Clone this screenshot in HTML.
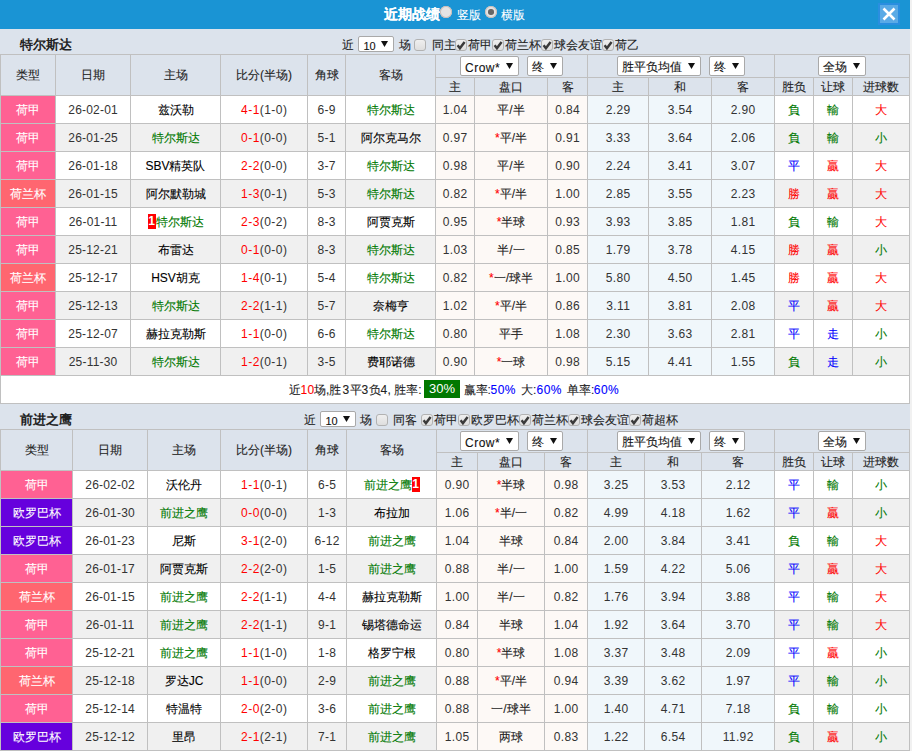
<!DOCTYPE html><html><head><meta charset="utf-8"><style>
html,body{margin:0;padding:0;background:#f1f1f1;overflow:hidden}
body{font-family:"Liberation Sans", sans-serif;font-size:12px;color:#000;width:912px;height:751px;position:relative;-webkit-text-stroke:0.1px currentColor}
div{box-sizing:content-box}
</style></head><body>
<div style="position:absolute;left:0px;top:0px;width:910px;height:751px;background:#dce3ec"></div>
<div style="position:absolute;left:0px;top:0px;width:910px;height:29px;background:#1a94d4"></div>
<div style="position:absolute;left:384px;top:6px;white-space:nowrap;line-height:14px;color:#fff;font-weight:bold;font-size:14px;line-height:16px">近期战绩</div>
<div style="position:absolute;left:440.3px;top:6.3px;width:11.5px;height:11.5px;border-radius:50%;background:#e4e4e4;box-shadow:inset 0 0 0 1px #c9bdb8"></div>
<div style="position:absolute;left:457px;top:8px;white-space:nowrap;line-height:14px;color:#fff">竖版</div>
<div style="position:absolute;left:485px;top:6.2px;width:11.8px;height:11.8px;border-radius:50%;background:#e4e4e4;box-shadow:inset 0 0 0 1px #c9bdb8"><div style="position:absolute;left:3.2px;top:3px;width:5.6px;height:5.6px;border-radius:50%;background:#666"></div></div>
<div style="position:absolute;left:501px;top:8px;white-space:nowrap;line-height:14px;color:#fff">横版</div>
<div style="position:absolute;left:878px;top:3px;width:22px;height:22px;background:#2a8ee0"></div>
<div style="position:absolute;left:880px;top:5px;width:18px;height:18px;background:#5aaae6"></div>
<svg style="position:absolute;left:880px;top:5px" width="18" height="18"><path d="M3.5 3.5L14.5 14.5M14.5 3.5L3.5 14.5" stroke="#fff" stroke-width="2.6"/></svg>
<div style="position:absolute;left:20px;top:37.5px;white-space:nowrap;line-height:14px;font-weight:bold;font-size:13px;color:#222;-webkit-text-stroke:0">特尔斯达</div>
<div style="position:absolute;left:342.3px;top:38px;white-space:nowrap;line-height:14px;color:#222">近</div>
<div style="position:absolute;left:358px;top:36px;width:34px;height:14px;border:1px solid #a9a9a9;border-radius:2px;background:#fff;line-height:14px"><span style="position:absolute;left:4.5px;top:1.5px;color:#111;font-size:11px">10</span><svg style="position:absolute;right:5px;top:4px" width="7" height="6"><path d="M0 0H7L3.5 6Z" fill="#111"/></svg></div>
<div style="position:absolute;left:398.5px;top:38px;white-space:nowrap;line-height:14px;color:#222">场</div>
<div style="position:absolute;left:414px;top:39px;width:10px;height:10px;border:1px solid #b2b2b2;border-radius:3px;background:linear-gradient(#efefef,#dedede);"></div>
<div style="position:absolute;left:431.5px;top:38px;white-space:nowrap;line-height:14px;color:#222">同主</div>
<div style="position:absolute;left:455px;top:39px;width:10px;height:10px;border:1px solid #b2b2b2;border-radius:3px;background:linear-gradient(#efefef,#dedede);"><svg style="position:absolute;left:-1px;top:-1px" width="12" height="12"><path d="M2.6 6.3L4.9 9.2L9.6 2.9" fill="none" stroke="#3a3a3a" stroke-width="2.5"/></svg></div>
<div style="position:absolute;left:468px;top:38px;white-space:nowrap;line-height:14px;color:#222">荷甲</div>
<div style="position:absolute;left:492px;top:39px;width:10px;height:10px;border:1px solid #b2b2b2;border-radius:3px;background:linear-gradient(#efefef,#dedede);"><svg style="position:absolute;left:-1px;top:-1px" width="12" height="12"><path d="M2.6 6.3L4.9 9.2L9.6 2.9" fill="none" stroke="#3a3a3a" stroke-width="2.5"/></svg></div>
<div style="position:absolute;left:504.75px;top:38px;white-space:nowrap;line-height:14px;color:#222">荷兰杯</div>
<div style="position:absolute;left:541px;top:39px;width:10px;height:10px;border:1px solid #b2b2b2;border-radius:3px;background:linear-gradient(#efefef,#dedede);"><svg style="position:absolute;left:-1px;top:-1px" width="12" height="12"><path d="M2.6 6.3L4.9 9.2L9.6 2.9" fill="none" stroke="#3a3a3a" stroke-width="2.5"/></svg></div>
<div style="position:absolute;left:554.1px;top:38px;white-space:nowrap;line-height:14px;color:#222">球会友谊</div>
<div style="position:absolute;left:602px;top:39px;width:10px;height:10px;border:1px solid #b2b2b2;border-radius:3px;background:linear-gradient(#efefef,#dedede);"><svg style="position:absolute;left:-1px;top:-1px" width="12" height="12"><path d="M2.6 6.3L4.9 9.2L9.6 2.9" fill="none" stroke="#3a3a3a" stroke-width="2.5"/></svg></div>
<div style="position:absolute;left:615px;top:38px;white-space:nowrap;line-height:14px;color:#222">荷乙</div>
<div style="position:absolute;left:0px;top:54px;width:910px;height:42px;background:#dce3ec"></div>
<div style="position:absolute;left:1px;top:55px;width:54px;height:40px;text-align:center;line-height:40px;white-space:nowrap;overflow:visible;color:#222;">类型</div>
<div style="position:absolute;left:56px;top:55px;width:74px;height:40px;text-align:center;line-height:40px;white-space:nowrap;overflow:visible;color:#222;">日期</div>
<div style="position:absolute;left:131px;top:55px;width:89px;height:40px;text-align:center;line-height:40px;white-space:nowrap;overflow:visible;color:#222;">主场</div>
<div style="position:absolute;left:221px;top:55px;width:86px;height:40px;text-align:center;line-height:40px;white-space:nowrap;overflow:visible;color:#222;">比分(半场)</div>
<div style="position:absolute;left:308px;top:55px;width:37px;height:40px;text-align:center;line-height:40px;white-space:nowrap;overflow:visible;color:#222;">角球</div>
<div style="position:absolute;left:346px;top:55px;width:89px;height:40px;text-align:center;line-height:40px;white-space:nowrap;overflow:visible;color:#222;">客场</div>
<div style="position:absolute;left:436px;top:78px;width:38px;height:17px;text-align:center;line-height:19px;white-space:nowrap;overflow:visible;color:#222;">主</div>
<div style="position:absolute;left:475px;top:78px;width:72px;height:17px;text-align:center;line-height:19px;white-space:nowrap;overflow:visible;color:#222;">盘口</div>
<div style="position:absolute;left:548px;top:78px;width:39px;height:17px;text-align:center;line-height:19px;white-space:nowrap;overflow:visible;color:#222;">客</div>
<div style="position:absolute;left:588px;top:78px;width:60px;height:17px;text-align:center;line-height:19px;white-space:nowrap;overflow:visible;color:#222;">主</div>
<div style="position:absolute;left:649px;top:78px;width:62px;height:17px;text-align:center;line-height:19px;white-space:nowrap;overflow:visible;color:#222;">和</div>
<div style="position:absolute;left:712px;top:78px;width:62px;height:17px;text-align:center;line-height:19px;white-space:nowrap;overflow:visible;color:#222;">客</div>
<div style="position:absolute;left:775px;top:78px;width:38px;height:17px;text-align:center;line-height:19px;white-space:nowrap;overflow:visible;color:#222;">胜负</div>
<div style="position:absolute;left:814px;top:78px;width:38px;height:17px;text-align:center;line-height:19px;white-space:nowrap;overflow:visible;color:#222;">让球</div>
<div style="position:absolute;left:853px;top:78px;width:56px;height:17px;text-align:center;line-height:19px;white-space:nowrap;overflow:visible;color:#222;">进球数</div>
<div style="position:absolute;left:460px;top:56px;width:57px;height:18px;border:1px solid #a9a9a9;border-radius:2px;background:#fff;line-height:18px;"><span style="position:absolute;left:4px;top:2px;color:#111"><span style="letter-spacing:0.5px">Crow*</span></span><svg style="position:absolute;right:5px;top:6px" width="7" height="6"><path d="M0 0H7L3.5 6Z" fill="#111"/></svg></div>
<div style="position:absolute;left:527px;top:56px;width:34px;height:18px;border:1px solid #a9a9a9;border-radius:2px;background:#fff;line-height:18px;"><span style="position:absolute;left:4px;top:1px;color:#111">终</span><svg style="position:absolute;right:5px;top:6px" width="7" height="6"><path d="M0 0H7L3.5 6Z" fill="#111"/></svg></div>
<div style="position:absolute;left:617px;top:56px;width:82px;height:18px;border:1px solid #a9a9a9;border-radius:2px;background:#fff;line-height:18px;"><span style="position:absolute;left:4px;top:1px;color:#111">胜平负均值</span><svg style="position:absolute;right:5px;top:6px" width="7" height="6"><path d="M0 0H7L3.5 6Z" fill="#111"/></svg></div>
<div style="position:absolute;left:709px;top:56px;width:34px;height:18px;border:1px solid #a9a9a9;border-radius:2px;background:#fff;line-height:18px;"><span style="position:absolute;left:4px;top:1px;color:#111">终</span><svg style="position:absolute;right:5px;top:6px" width="7" height="6"><path d="M0 0H7L3.5 6Z" fill="#111"/></svg></div>
<div style="position:absolute;left:818px;top:56px;width:46px;height:18px;border:1px solid #a9a9a9;border-radius:2px;background:#fff;line-height:18px;"><span style="position:absolute;left:4px;top:1px;color:#111">全场</span><svg style="position:absolute;right:5px;top:6px" width="7" height="6"><path d="M0 0H7L3.5 6Z" fill="#111"/></svg></div>
<div style="position:absolute;left:1px;top:96px;width:54px;height:27px;text-align:center;line-height:29px;white-space:nowrap;overflow:visible;color:#fff;background:#ff6193;">荷甲</div>
<div style="position:absolute;left:56px;top:96px;width:74px;height:27px;text-align:center;line-height:29px;white-space:nowrap;overflow:visible;color:#333;letter-spacing:0.2px;text-indent:0.2px;-webkit-text-stroke:0;background:#ffffff;">26-02-01</div>
<div style="position:absolute;left:131px;top:96px;width:89px;height:27px;text-align:center;line-height:29px;white-space:nowrap;overflow:visible;;background:#ffffff;">兹沃勒</div>
<div style="position:absolute;left:221px;top:96px;width:86px;height:27px;text-align:center;line-height:29px;white-space:nowrap;overflow:visible;letter-spacing:0.45px;text-indent:0.45px;-webkit-text-stroke:0;background:#ffffff;"><span style="color:#ff0000">4-1</span><span style="color:#333">(1-0)</span></div>
<div style="position:absolute;left:308px;top:96px;width:37px;height:27px;text-align:center;line-height:29px;white-space:nowrap;overflow:visible;color:#333;letter-spacing:0.3px;text-indent:0.3px;-webkit-text-stroke:0;background:#ffffff;">6-9</div>
<div style="position:absolute;left:346px;top:96px;width:89px;height:27px;text-align:center;line-height:29px;white-space:nowrap;overflow:visible;;background:#ffffff;"><span style="color:#007800">特尔斯达</span></div>
<div style="position:absolute;left:436px;top:96px;width:38px;height:27px;text-align:center;line-height:29px;white-space:nowrap;overflow:visible;color:#333;letter-spacing:0.4px;text-indent:0.4px;-webkit-text-stroke:0;background:#fdf9f6;">1.04</div>
<div style="position:absolute;left:475px;top:96px;width:72px;height:27px;text-align:center;line-height:29px;white-space:nowrap;overflow:visible;color:#222;background:#fdf9f6;">平/半</div>
<div style="position:absolute;left:548px;top:96px;width:39px;height:27px;text-align:center;line-height:29px;white-space:nowrap;overflow:visible;color:#333;letter-spacing:0.4px;text-indent:0.4px;-webkit-text-stroke:0;background:#fdf9f6;">0.84</div>
<div style="position:absolute;left:588px;top:96px;width:60px;height:27px;text-align:center;line-height:29px;white-space:nowrap;overflow:visible;color:#333;letter-spacing:0.4px;text-indent:0.4px;-webkit-text-stroke:0;background:#f0f7fb;">2.29</div>
<div style="position:absolute;left:649px;top:96px;width:62px;height:27px;text-align:center;line-height:29px;white-space:nowrap;overflow:visible;color:#333;letter-spacing:0.4px;text-indent:0.4px;-webkit-text-stroke:0;background:#f0f7fb;">3.54</div>
<div style="position:absolute;left:712px;top:96px;width:62px;height:27px;text-align:center;line-height:29px;white-space:nowrap;overflow:visible;color:#333;letter-spacing:0.4px;text-indent:0.4px;-webkit-text-stroke:0;background:#f0f7fb;">2.90</div>
<div style="position:absolute;left:775px;top:96px;width:38px;height:27px;text-align:center;line-height:29px;white-space:nowrap;overflow:visible;color:#007800;background:#ffffff;">負</div>
<div style="position:absolute;left:814px;top:96px;width:38px;height:27px;text-align:center;line-height:29px;white-space:nowrap;overflow:visible;color:#007800;background:#ffffff;">輸</div>
<div style="position:absolute;left:853px;top:96px;width:56px;height:27px;text-align:center;line-height:29px;white-space:nowrap;overflow:visible;color:#ff0000;background:#ffffff;">大</div>
<div style="position:absolute;left:1px;top:124px;width:54px;height:27px;text-align:center;line-height:29px;white-space:nowrap;overflow:visible;color:#fff;background:#ff6193;">荷甲</div>
<div style="position:absolute;left:56px;top:124px;width:74px;height:27px;text-align:center;line-height:29px;white-space:nowrap;overflow:visible;color:#333;letter-spacing:0.2px;text-indent:0.2px;-webkit-text-stroke:0;background:#f0f0f0;">26-01-25</div>
<div style="position:absolute;left:131px;top:124px;width:89px;height:27px;text-align:center;line-height:29px;white-space:nowrap;overflow:visible;;background:#f0f0f0;"><span style="color:#007800">特尔斯达</span></div>
<div style="position:absolute;left:221px;top:124px;width:86px;height:27px;text-align:center;line-height:29px;white-space:nowrap;overflow:visible;letter-spacing:0.45px;text-indent:0.45px;-webkit-text-stroke:0;background:#f0f0f0;"><span style="color:#ff0000">0-1</span><span style="color:#333">(0-0)</span></div>
<div style="position:absolute;left:308px;top:124px;width:37px;height:27px;text-align:center;line-height:29px;white-space:nowrap;overflow:visible;color:#333;letter-spacing:0.3px;text-indent:0.3px;-webkit-text-stroke:0;background:#f0f0f0;">5-1</div>
<div style="position:absolute;left:346px;top:124px;width:89px;height:27px;text-align:center;line-height:29px;white-space:nowrap;overflow:visible;;background:#f0f0f0;">阿尔克马尔</div>
<div style="position:absolute;left:436px;top:124px;width:38px;height:27px;text-align:center;line-height:29px;white-space:nowrap;overflow:visible;color:#333;letter-spacing:0.4px;text-indent:0.4px;-webkit-text-stroke:0;background:#fdf9f6;">0.97</div>
<div style="position:absolute;left:475px;top:124px;width:72px;height:27px;text-align:center;line-height:29px;white-space:nowrap;overflow:visible;color:#222;background:#fdf9f6;"><span style="color:#ff0000">*</span>平/半</div>
<div style="position:absolute;left:548px;top:124px;width:39px;height:27px;text-align:center;line-height:29px;white-space:nowrap;overflow:visible;color:#333;letter-spacing:0.4px;text-indent:0.4px;-webkit-text-stroke:0;background:#fdf9f6;">0.91</div>
<div style="position:absolute;left:588px;top:124px;width:60px;height:27px;text-align:center;line-height:29px;white-space:nowrap;overflow:visible;color:#333;letter-spacing:0.4px;text-indent:0.4px;-webkit-text-stroke:0;background:#f0f7fb;">3.33</div>
<div style="position:absolute;left:649px;top:124px;width:62px;height:27px;text-align:center;line-height:29px;white-space:nowrap;overflow:visible;color:#333;letter-spacing:0.4px;text-indent:0.4px;-webkit-text-stroke:0;background:#f0f7fb;">3.64</div>
<div style="position:absolute;left:712px;top:124px;width:62px;height:27px;text-align:center;line-height:29px;white-space:nowrap;overflow:visible;color:#333;letter-spacing:0.4px;text-indent:0.4px;-webkit-text-stroke:0;background:#f0f7fb;">2.06</div>
<div style="position:absolute;left:775px;top:124px;width:38px;height:27px;text-align:center;line-height:29px;white-space:nowrap;overflow:visible;color:#007800;background:#f0f0f0;">負</div>
<div style="position:absolute;left:814px;top:124px;width:38px;height:27px;text-align:center;line-height:29px;white-space:nowrap;overflow:visible;color:#007800;background:#f0f0f0;">輸</div>
<div style="position:absolute;left:853px;top:124px;width:56px;height:27px;text-align:center;line-height:29px;white-space:nowrap;overflow:visible;color:#007800;background:#f0f0f0;">小</div>
<div style="position:absolute;left:1px;top:152px;width:54px;height:27px;text-align:center;line-height:29px;white-space:nowrap;overflow:visible;color:#fff;background:#ff6193;">荷甲</div>
<div style="position:absolute;left:56px;top:152px;width:74px;height:27px;text-align:center;line-height:29px;white-space:nowrap;overflow:visible;color:#333;letter-spacing:0.2px;text-indent:0.2px;-webkit-text-stroke:0;background:#ffffff;">26-01-18</div>
<div style="position:absolute;left:131px;top:152px;width:89px;height:27px;text-align:center;line-height:29px;white-space:nowrap;overflow:visible;;background:#ffffff;">SBV精英队</div>
<div style="position:absolute;left:221px;top:152px;width:86px;height:27px;text-align:center;line-height:29px;white-space:nowrap;overflow:visible;letter-spacing:0.45px;text-indent:0.45px;-webkit-text-stroke:0;background:#ffffff;"><span style="color:#ff0000">2-2</span><span style="color:#333">(0-0)</span></div>
<div style="position:absolute;left:308px;top:152px;width:37px;height:27px;text-align:center;line-height:29px;white-space:nowrap;overflow:visible;color:#333;letter-spacing:0.3px;text-indent:0.3px;-webkit-text-stroke:0;background:#ffffff;">3-7</div>
<div style="position:absolute;left:346px;top:152px;width:89px;height:27px;text-align:center;line-height:29px;white-space:nowrap;overflow:visible;;background:#ffffff;"><span style="color:#007800">特尔斯达</span></div>
<div style="position:absolute;left:436px;top:152px;width:38px;height:27px;text-align:center;line-height:29px;white-space:nowrap;overflow:visible;color:#333;letter-spacing:0.4px;text-indent:0.4px;-webkit-text-stroke:0;background:#fdf9f6;">0.98</div>
<div style="position:absolute;left:475px;top:152px;width:72px;height:27px;text-align:center;line-height:29px;white-space:nowrap;overflow:visible;color:#222;background:#fdf9f6;">平/半</div>
<div style="position:absolute;left:548px;top:152px;width:39px;height:27px;text-align:center;line-height:29px;white-space:nowrap;overflow:visible;color:#333;letter-spacing:0.4px;text-indent:0.4px;-webkit-text-stroke:0;background:#fdf9f6;">0.90</div>
<div style="position:absolute;left:588px;top:152px;width:60px;height:27px;text-align:center;line-height:29px;white-space:nowrap;overflow:visible;color:#333;letter-spacing:0.4px;text-indent:0.4px;-webkit-text-stroke:0;background:#f0f7fb;">2.24</div>
<div style="position:absolute;left:649px;top:152px;width:62px;height:27px;text-align:center;line-height:29px;white-space:nowrap;overflow:visible;color:#333;letter-spacing:0.4px;text-indent:0.4px;-webkit-text-stroke:0;background:#f0f7fb;">3.41</div>
<div style="position:absolute;left:712px;top:152px;width:62px;height:27px;text-align:center;line-height:29px;white-space:nowrap;overflow:visible;color:#333;letter-spacing:0.4px;text-indent:0.4px;-webkit-text-stroke:0;background:#f0f7fb;">3.07</div>
<div style="position:absolute;left:775px;top:152px;width:38px;height:27px;text-align:center;line-height:29px;white-space:nowrap;overflow:visible;color:#0000ff;background:#ffffff;">平</div>
<div style="position:absolute;left:814px;top:152px;width:38px;height:27px;text-align:center;line-height:29px;white-space:nowrap;overflow:visible;color:#ff0000;background:#ffffff;">贏</div>
<div style="position:absolute;left:853px;top:152px;width:56px;height:27px;text-align:center;line-height:29px;white-space:nowrap;overflow:visible;color:#ff0000;background:#ffffff;">大</div>
<div style="position:absolute;left:1px;top:180px;width:54px;height:27px;text-align:center;line-height:29px;white-space:nowrap;overflow:visible;color:#fff;background:#ff6670;">荷兰杯</div>
<div style="position:absolute;left:56px;top:180px;width:74px;height:27px;text-align:center;line-height:29px;white-space:nowrap;overflow:visible;color:#333;letter-spacing:0.2px;text-indent:0.2px;-webkit-text-stroke:0;background:#f0f0f0;">26-01-15</div>
<div style="position:absolute;left:131px;top:180px;width:89px;height:27px;text-align:center;line-height:29px;white-space:nowrap;overflow:visible;;background:#f0f0f0;">阿尔默勒城</div>
<div style="position:absolute;left:221px;top:180px;width:86px;height:27px;text-align:center;line-height:29px;white-space:nowrap;overflow:visible;letter-spacing:0.45px;text-indent:0.45px;-webkit-text-stroke:0;background:#f0f0f0;"><span style="color:#ff0000">1-3</span><span style="color:#333">(0-1)</span></div>
<div style="position:absolute;left:308px;top:180px;width:37px;height:27px;text-align:center;line-height:29px;white-space:nowrap;overflow:visible;color:#333;letter-spacing:0.3px;text-indent:0.3px;-webkit-text-stroke:0;background:#f0f0f0;">5-3</div>
<div style="position:absolute;left:346px;top:180px;width:89px;height:27px;text-align:center;line-height:29px;white-space:nowrap;overflow:visible;;background:#f0f0f0;"><span style="color:#007800">特尔斯达</span></div>
<div style="position:absolute;left:436px;top:180px;width:38px;height:27px;text-align:center;line-height:29px;white-space:nowrap;overflow:visible;color:#333;letter-spacing:0.4px;text-indent:0.4px;-webkit-text-stroke:0;background:#fdf9f6;">0.82</div>
<div style="position:absolute;left:475px;top:180px;width:72px;height:27px;text-align:center;line-height:29px;white-space:nowrap;overflow:visible;color:#222;background:#fdf9f6;"><span style="color:#ff0000">*</span>平/半</div>
<div style="position:absolute;left:548px;top:180px;width:39px;height:27px;text-align:center;line-height:29px;white-space:nowrap;overflow:visible;color:#333;letter-spacing:0.4px;text-indent:0.4px;-webkit-text-stroke:0;background:#fdf9f6;">1.00</div>
<div style="position:absolute;left:588px;top:180px;width:60px;height:27px;text-align:center;line-height:29px;white-space:nowrap;overflow:visible;color:#333;letter-spacing:0.4px;text-indent:0.4px;-webkit-text-stroke:0;background:#f0f7fb;">2.85</div>
<div style="position:absolute;left:649px;top:180px;width:62px;height:27px;text-align:center;line-height:29px;white-space:nowrap;overflow:visible;color:#333;letter-spacing:0.4px;text-indent:0.4px;-webkit-text-stroke:0;background:#f0f7fb;">3.55</div>
<div style="position:absolute;left:712px;top:180px;width:62px;height:27px;text-align:center;line-height:29px;white-space:nowrap;overflow:visible;color:#333;letter-spacing:0.4px;text-indent:0.4px;-webkit-text-stroke:0;background:#f0f7fb;">2.23</div>
<div style="position:absolute;left:775px;top:180px;width:38px;height:27px;text-align:center;line-height:29px;white-space:nowrap;overflow:visible;color:#ff0000;background:#f0f0f0;">勝</div>
<div style="position:absolute;left:814px;top:180px;width:38px;height:27px;text-align:center;line-height:29px;white-space:nowrap;overflow:visible;color:#ff0000;background:#f0f0f0;">贏</div>
<div style="position:absolute;left:853px;top:180px;width:56px;height:27px;text-align:center;line-height:29px;white-space:nowrap;overflow:visible;color:#ff0000;background:#f0f0f0;">大</div>
<div style="position:absolute;left:1px;top:208px;width:54px;height:27px;text-align:center;line-height:29px;white-space:nowrap;overflow:visible;color:#fff;background:#ff6193;">荷甲</div>
<div style="position:absolute;left:56px;top:208px;width:74px;height:27px;text-align:center;line-height:29px;white-space:nowrap;overflow:visible;color:#333;letter-spacing:0.2px;text-indent:0.2px;-webkit-text-stroke:0;background:#ffffff;">26-01-11</div>
<div style="position:absolute;left:131px;top:208px;width:89px;height:27px;text-align:center;line-height:29px;white-space:nowrap;overflow:visible;;background:#ffffff;"><span style="display:inline-block;width:8px;height:15px;line-height:15px;vertical-align:1px;background:#f00;color:#fff;font-weight:bold;text-align:center;-webkit-text-stroke:0">1</span><span style="color:#007800">特尔斯达</span></div>
<div style="position:absolute;left:221px;top:208px;width:86px;height:27px;text-align:center;line-height:29px;white-space:nowrap;overflow:visible;letter-spacing:0.45px;text-indent:0.45px;-webkit-text-stroke:0;background:#ffffff;"><span style="color:#ff0000">2-3</span><span style="color:#333">(0-2)</span></div>
<div style="position:absolute;left:308px;top:208px;width:37px;height:27px;text-align:center;line-height:29px;white-space:nowrap;overflow:visible;color:#333;letter-spacing:0.3px;text-indent:0.3px;-webkit-text-stroke:0;background:#ffffff;">8-3</div>
<div style="position:absolute;left:346px;top:208px;width:89px;height:27px;text-align:center;line-height:29px;white-space:nowrap;overflow:visible;;background:#ffffff;">阿贾克斯</div>
<div style="position:absolute;left:436px;top:208px;width:38px;height:27px;text-align:center;line-height:29px;white-space:nowrap;overflow:visible;color:#333;letter-spacing:0.4px;text-indent:0.4px;-webkit-text-stroke:0;background:#fdf9f6;">0.95</div>
<div style="position:absolute;left:475px;top:208px;width:72px;height:27px;text-align:center;line-height:29px;white-space:nowrap;overflow:visible;color:#222;background:#fdf9f6;"><span style="color:#ff0000">*</span>半球</div>
<div style="position:absolute;left:548px;top:208px;width:39px;height:27px;text-align:center;line-height:29px;white-space:nowrap;overflow:visible;color:#333;letter-spacing:0.4px;text-indent:0.4px;-webkit-text-stroke:0;background:#fdf9f6;">0.93</div>
<div style="position:absolute;left:588px;top:208px;width:60px;height:27px;text-align:center;line-height:29px;white-space:nowrap;overflow:visible;color:#333;letter-spacing:0.4px;text-indent:0.4px;-webkit-text-stroke:0;background:#f0f7fb;">3.93</div>
<div style="position:absolute;left:649px;top:208px;width:62px;height:27px;text-align:center;line-height:29px;white-space:nowrap;overflow:visible;color:#333;letter-spacing:0.4px;text-indent:0.4px;-webkit-text-stroke:0;background:#f0f7fb;">3.85</div>
<div style="position:absolute;left:712px;top:208px;width:62px;height:27px;text-align:center;line-height:29px;white-space:nowrap;overflow:visible;color:#333;letter-spacing:0.4px;text-indent:0.4px;-webkit-text-stroke:0;background:#f0f7fb;">1.81</div>
<div style="position:absolute;left:775px;top:208px;width:38px;height:27px;text-align:center;line-height:29px;white-space:nowrap;overflow:visible;color:#007800;background:#ffffff;">負</div>
<div style="position:absolute;left:814px;top:208px;width:38px;height:27px;text-align:center;line-height:29px;white-space:nowrap;overflow:visible;color:#007800;background:#ffffff;">輸</div>
<div style="position:absolute;left:853px;top:208px;width:56px;height:27px;text-align:center;line-height:29px;white-space:nowrap;overflow:visible;color:#ff0000;background:#ffffff;">大</div>
<div style="position:absolute;left:1px;top:236px;width:54px;height:27px;text-align:center;line-height:29px;white-space:nowrap;overflow:visible;color:#fff;background:#ff6193;">荷甲</div>
<div style="position:absolute;left:56px;top:236px;width:74px;height:27px;text-align:center;line-height:29px;white-space:nowrap;overflow:visible;color:#333;letter-spacing:0.2px;text-indent:0.2px;-webkit-text-stroke:0;background:#f0f0f0;">25-12-21</div>
<div style="position:absolute;left:131px;top:236px;width:89px;height:27px;text-align:center;line-height:29px;white-space:nowrap;overflow:visible;;background:#f0f0f0;">布雷达</div>
<div style="position:absolute;left:221px;top:236px;width:86px;height:27px;text-align:center;line-height:29px;white-space:nowrap;overflow:visible;letter-spacing:0.45px;text-indent:0.45px;-webkit-text-stroke:0;background:#f0f0f0;"><span style="color:#ff0000">0-1</span><span style="color:#333">(0-0)</span></div>
<div style="position:absolute;left:308px;top:236px;width:37px;height:27px;text-align:center;line-height:29px;white-space:nowrap;overflow:visible;color:#333;letter-spacing:0.3px;text-indent:0.3px;-webkit-text-stroke:0;background:#f0f0f0;">8-3</div>
<div style="position:absolute;left:346px;top:236px;width:89px;height:27px;text-align:center;line-height:29px;white-space:nowrap;overflow:visible;;background:#f0f0f0;"><span style="color:#007800">特尔斯达</span></div>
<div style="position:absolute;left:436px;top:236px;width:38px;height:27px;text-align:center;line-height:29px;white-space:nowrap;overflow:visible;color:#333;letter-spacing:0.4px;text-indent:0.4px;-webkit-text-stroke:0;background:#fdf9f6;">1.03</div>
<div style="position:absolute;left:475px;top:236px;width:72px;height:27px;text-align:center;line-height:29px;white-space:nowrap;overflow:visible;color:#222;background:#fdf9f6;">半/一</div>
<div style="position:absolute;left:548px;top:236px;width:39px;height:27px;text-align:center;line-height:29px;white-space:nowrap;overflow:visible;color:#333;letter-spacing:0.4px;text-indent:0.4px;-webkit-text-stroke:0;background:#fdf9f6;">0.85</div>
<div style="position:absolute;left:588px;top:236px;width:60px;height:27px;text-align:center;line-height:29px;white-space:nowrap;overflow:visible;color:#333;letter-spacing:0.4px;text-indent:0.4px;-webkit-text-stroke:0;background:#f0f7fb;">1.79</div>
<div style="position:absolute;left:649px;top:236px;width:62px;height:27px;text-align:center;line-height:29px;white-space:nowrap;overflow:visible;color:#333;letter-spacing:0.4px;text-indent:0.4px;-webkit-text-stroke:0;background:#f0f7fb;">3.78</div>
<div style="position:absolute;left:712px;top:236px;width:62px;height:27px;text-align:center;line-height:29px;white-space:nowrap;overflow:visible;color:#333;letter-spacing:0.4px;text-indent:0.4px;-webkit-text-stroke:0;background:#f0f7fb;">4.15</div>
<div style="position:absolute;left:775px;top:236px;width:38px;height:27px;text-align:center;line-height:29px;white-space:nowrap;overflow:visible;color:#ff0000;background:#f0f0f0;">勝</div>
<div style="position:absolute;left:814px;top:236px;width:38px;height:27px;text-align:center;line-height:29px;white-space:nowrap;overflow:visible;color:#ff0000;background:#f0f0f0;">贏</div>
<div style="position:absolute;left:853px;top:236px;width:56px;height:27px;text-align:center;line-height:29px;white-space:nowrap;overflow:visible;color:#007800;background:#f0f0f0;">小</div>
<div style="position:absolute;left:1px;top:264px;width:54px;height:27px;text-align:center;line-height:29px;white-space:nowrap;overflow:visible;color:#fff;background:#ff6670;">荷兰杯</div>
<div style="position:absolute;left:56px;top:264px;width:74px;height:27px;text-align:center;line-height:29px;white-space:nowrap;overflow:visible;color:#333;letter-spacing:0.2px;text-indent:0.2px;-webkit-text-stroke:0;background:#ffffff;">25-12-17</div>
<div style="position:absolute;left:131px;top:264px;width:89px;height:27px;text-align:center;line-height:29px;white-space:nowrap;overflow:visible;;background:#ffffff;">HSV胡克</div>
<div style="position:absolute;left:221px;top:264px;width:86px;height:27px;text-align:center;line-height:29px;white-space:nowrap;overflow:visible;letter-spacing:0.45px;text-indent:0.45px;-webkit-text-stroke:0;background:#ffffff;"><span style="color:#ff0000">1-4</span><span style="color:#333">(0-1)</span></div>
<div style="position:absolute;left:308px;top:264px;width:37px;height:27px;text-align:center;line-height:29px;white-space:nowrap;overflow:visible;color:#333;letter-spacing:0.3px;text-indent:0.3px;-webkit-text-stroke:0;background:#ffffff;">5-4</div>
<div style="position:absolute;left:346px;top:264px;width:89px;height:27px;text-align:center;line-height:29px;white-space:nowrap;overflow:visible;;background:#ffffff;"><span style="color:#007800">特尔斯达</span></div>
<div style="position:absolute;left:436px;top:264px;width:38px;height:27px;text-align:center;line-height:29px;white-space:nowrap;overflow:visible;color:#333;letter-spacing:0.4px;text-indent:0.4px;-webkit-text-stroke:0;background:#fdf9f6;">0.82</div>
<div style="position:absolute;left:475px;top:264px;width:72px;height:27px;text-align:center;line-height:29px;white-space:nowrap;overflow:visible;color:#222;background:#fdf9f6;"><span style="color:#ff0000">*</span>一/球半</div>
<div style="position:absolute;left:548px;top:264px;width:39px;height:27px;text-align:center;line-height:29px;white-space:nowrap;overflow:visible;color:#333;letter-spacing:0.4px;text-indent:0.4px;-webkit-text-stroke:0;background:#fdf9f6;">1.00</div>
<div style="position:absolute;left:588px;top:264px;width:60px;height:27px;text-align:center;line-height:29px;white-space:nowrap;overflow:visible;color:#333;letter-spacing:0.4px;text-indent:0.4px;-webkit-text-stroke:0;background:#f0f7fb;">5.80</div>
<div style="position:absolute;left:649px;top:264px;width:62px;height:27px;text-align:center;line-height:29px;white-space:nowrap;overflow:visible;color:#333;letter-spacing:0.4px;text-indent:0.4px;-webkit-text-stroke:0;background:#f0f7fb;">4.50</div>
<div style="position:absolute;left:712px;top:264px;width:62px;height:27px;text-align:center;line-height:29px;white-space:nowrap;overflow:visible;color:#333;letter-spacing:0.4px;text-indent:0.4px;-webkit-text-stroke:0;background:#f0f7fb;">1.45</div>
<div style="position:absolute;left:775px;top:264px;width:38px;height:27px;text-align:center;line-height:29px;white-space:nowrap;overflow:visible;color:#ff0000;background:#ffffff;">勝</div>
<div style="position:absolute;left:814px;top:264px;width:38px;height:27px;text-align:center;line-height:29px;white-space:nowrap;overflow:visible;color:#ff0000;background:#ffffff;">贏</div>
<div style="position:absolute;left:853px;top:264px;width:56px;height:27px;text-align:center;line-height:29px;white-space:nowrap;overflow:visible;color:#ff0000;background:#ffffff;">大</div>
<div style="position:absolute;left:1px;top:292px;width:54px;height:27px;text-align:center;line-height:29px;white-space:nowrap;overflow:visible;color:#fff;background:#ff6193;">荷甲</div>
<div style="position:absolute;left:56px;top:292px;width:74px;height:27px;text-align:center;line-height:29px;white-space:nowrap;overflow:visible;color:#333;letter-spacing:0.2px;text-indent:0.2px;-webkit-text-stroke:0;background:#f0f0f0;">25-12-13</div>
<div style="position:absolute;left:131px;top:292px;width:89px;height:27px;text-align:center;line-height:29px;white-space:nowrap;overflow:visible;;background:#f0f0f0;"><span style="color:#007800">特尔斯达</span></div>
<div style="position:absolute;left:221px;top:292px;width:86px;height:27px;text-align:center;line-height:29px;white-space:nowrap;overflow:visible;letter-spacing:0.45px;text-indent:0.45px;-webkit-text-stroke:0;background:#f0f0f0;"><span style="color:#ff0000">2-2</span><span style="color:#333">(1-1)</span></div>
<div style="position:absolute;left:308px;top:292px;width:37px;height:27px;text-align:center;line-height:29px;white-space:nowrap;overflow:visible;color:#333;letter-spacing:0.3px;text-indent:0.3px;-webkit-text-stroke:0;background:#f0f0f0;">5-7</div>
<div style="position:absolute;left:346px;top:292px;width:89px;height:27px;text-align:center;line-height:29px;white-space:nowrap;overflow:visible;;background:#f0f0f0;">奈梅亨</div>
<div style="position:absolute;left:436px;top:292px;width:38px;height:27px;text-align:center;line-height:29px;white-space:nowrap;overflow:visible;color:#333;letter-spacing:0.4px;text-indent:0.4px;-webkit-text-stroke:0;background:#fdf9f6;">1.02</div>
<div style="position:absolute;left:475px;top:292px;width:72px;height:27px;text-align:center;line-height:29px;white-space:nowrap;overflow:visible;color:#222;background:#fdf9f6;"><span style="color:#ff0000">*</span>平/半</div>
<div style="position:absolute;left:548px;top:292px;width:39px;height:27px;text-align:center;line-height:29px;white-space:nowrap;overflow:visible;color:#333;letter-spacing:0.4px;text-indent:0.4px;-webkit-text-stroke:0;background:#fdf9f6;">0.86</div>
<div style="position:absolute;left:588px;top:292px;width:60px;height:27px;text-align:center;line-height:29px;white-space:nowrap;overflow:visible;color:#333;letter-spacing:0.4px;text-indent:0.4px;-webkit-text-stroke:0;background:#f0f7fb;">3.11</div>
<div style="position:absolute;left:649px;top:292px;width:62px;height:27px;text-align:center;line-height:29px;white-space:nowrap;overflow:visible;color:#333;letter-spacing:0.4px;text-indent:0.4px;-webkit-text-stroke:0;background:#f0f7fb;">3.81</div>
<div style="position:absolute;left:712px;top:292px;width:62px;height:27px;text-align:center;line-height:29px;white-space:nowrap;overflow:visible;color:#333;letter-spacing:0.4px;text-indent:0.4px;-webkit-text-stroke:0;background:#f0f7fb;">2.08</div>
<div style="position:absolute;left:775px;top:292px;width:38px;height:27px;text-align:center;line-height:29px;white-space:nowrap;overflow:visible;color:#0000ff;background:#f0f0f0;">平</div>
<div style="position:absolute;left:814px;top:292px;width:38px;height:27px;text-align:center;line-height:29px;white-space:nowrap;overflow:visible;color:#ff0000;background:#f0f0f0;">贏</div>
<div style="position:absolute;left:853px;top:292px;width:56px;height:27px;text-align:center;line-height:29px;white-space:nowrap;overflow:visible;color:#ff0000;background:#f0f0f0;">大</div>
<div style="position:absolute;left:1px;top:320px;width:54px;height:27px;text-align:center;line-height:29px;white-space:nowrap;overflow:visible;color:#fff;background:#ff6193;">荷甲</div>
<div style="position:absolute;left:56px;top:320px;width:74px;height:27px;text-align:center;line-height:29px;white-space:nowrap;overflow:visible;color:#333;letter-spacing:0.2px;text-indent:0.2px;-webkit-text-stroke:0;background:#ffffff;">25-12-07</div>
<div style="position:absolute;left:131px;top:320px;width:89px;height:27px;text-align:center;line-height:29px;white-space:nowrap;overflow:visible;;background:#ffffff;">赫拉克勒斯</div>
<div style="position:absolute;left:221px;top:320px;width:86px;height:27px;text-align:center;line-height:29px;white-space:nowrap;overflow:visible;letter-spacing:0.45px;text-indent:0.45px;-webkit-text-stroke:0;background:#ffffff;"><span style="color:#ff0000">1-1</span><span style="color:#333">(0-0)</span></div>
<div style="position:absolute;left:308px;top:320px;width:37px;height:27px;text-align:center;line-height:29px;white-space:nowrap;overflow:visible;color:#333;letter-spacing:0.3px;text-indent:0.3px;-webkit-text-stroke:0;background:#ffffff;">6-6</div>
<div style="position:absolute;left:346px;top:320px;width:89px;height:27px;text-align:center;line-height:29px;white-space:nowrap;overflow:visible;;background:#ffffff;"><span style="color:#007800">特尔斯达</span></div>
<div style="position:absolute;left:436px;top:320px;width:38px;height:27px;text-align:center;line-height:29px;white-space:nowrap;overflow:visible;color:#333;letter-spacing:0.4px;text-indent:0.4px;-webkit-text-stroke:0;background:#fdf9f6;">0.80</div>
<div style="position:absolute;left:475px;top:320px;width:72px;height:27px;text-align:center;line-height:29px;white-space:nowrap;overflow:visible;color:#222;background:#fdf9f6;">平手</div>
<div style="position:absolute;left:548px;top:320px;width:39px;height:27px;text-align:center;line-height:29px;white-space:nowrap;overflow:visible;color:#333;letter-spacing:0.4px;text-indent:0.4px;-webkit-text-stroke:0;background:#fdf9f6;">1.08</div>
<div style="position:absolute;left:588px;top:320px;width:60px;height:27px;text-align:center;line-height:29px;white-space:nowrap;overflow:visible;color:#333;letter-spacing:0.4px;text-indent:0.4px;-webkit-text-stroke:0;background:#f0f7fb;">2.30</div>
<div style="position:absolute;left:649px;top:320px;width:62px;height:27px;text-align:center;line-height:29px;white-space:nowrap;overflow:visible;color:#333;letter-spacing:0.4px;text-indent:0.4px;-webkit-text-stroke:0;background:#f0f7fb;">3.63</div>
<div style="position:absolute;left:712px;top:320px;width:62px;height:27px;text-align:center;line-height:29px;white-space:nowrap;overflow:visible;color:#333;letter-spacing:0.4px;text-indent:0.4px;-webkit-text-stroke:0;background:#f0f7fb;">2.81</div>
<div style="position:absolute;left:775px;top:320px;width:38px;height:27px;text-align:center;line-height:29px;white-space:nowrap;overflow:visible;color:#0000ff;background:#ffffff;">平</div>
<div style="position:absolute;left:814px;top:320px;width:38px;height:27px;text-align:center;line-height:29px;white-space:nowrap;overflow:visible;color:#0000ff;background:#ffffff;">走</div>
<div style="position:absolute;left:853px;top:320px;width:56px;height:27px;text-align:center;line-height:29px;white-space:nowrap;overflow:visible;color:#007800;background:#ffffff;">小</div>
<div style="position:absolute;left:1px;top:348px;width:54px;height:27px;text-align:center;line-height:29px;white-space:nowrap;overflow:visible;color:#fff;background:#ff6193;">荷甲</div>
<div style="position:absolute;left:56px;top:348px;width:74px;height:27px;text-align:center;line-height:29px;white-space:nowrap;overflow:visible;color:#333;letter-spacing:0.2px;text-indent:0.2px;-webkit-text-stroke:0;background:#f0f0f0;">25-11-30</div>
<div style="position:absolute;left:131px;top:348px;width:89px;height:27px;text-align:center;line-height:29px;white-space:nowrap;overflow:visible;;background:#f0f0f0;"><span style="color:#007800">特尔斯达</span></div>
<div style="position:absolute;left:221px;top:348px;width:86px;height:27px;text-align:center;line-height:29px;white-space:nowrap;overflow:visible;letter-spacing:0.45px;text-indent:0.45px;-webkit-text-stroke:0;background:#f0f0f0;"><span style="color:#ff0000">1-2</span><span style="color:#333">(0-1)</span></div>
<div style="position:absolute;left:308px;top:348px;width:37px;height:27px;text-align:center;line-height:29px;white-space:nowrap;overflow:visible;color:#333;letter-spacing:0.3px;text-indent:0.3px;-webkit-text-stroke:0;background:#f0f0f0;">3-5</div>
<div style="position:absolute;left:346px;top:348px;width:89px;height:27px;text-align:center;line-height:29px;white-space:nowrap;overflow:visible;;background:#f0f0f0;">费耶诺德</div>
<div style="position:absolute;left:436px;top:348px;width:38px;height:27px;text-align:center;line-height:29px;white-space:nowrap;overflow:visible;color:#333;letter-spacing:0.4px;text-indent:0.4px;-webkit-text-stroke:0;background:#fdf9f6;">0.90</div>
<div style="position:absolute;left:475px;top:348px;width:72px;height:27px;text-align:center;line-height:29px;white-space:nowrap;overflow:visible;color:#222;background:#fdf9f6;"><span style="color:#ff0000">*</span>一球</div>
<div style="position:absolute;left:548px;top:348px;width:39px;height:27px;text-align:center;line-height:29px;white-space:nowrap;overflow:visible;color:#333;letter-spacing:0.4px;text-indent:0.4px;-webkit-text-stroke:0;background:#fdf9f6;">0.98</div>
<div style="position:absolute;left:588px;top:348px;width:60px;height:27px;text-align:center;line-height:29px;white-space:nowrap;overflow:visible;color:#333;letter-spacing:0.4px;text-indent:0.4px;-webkit-text-stroke:0;background:#f0f7fb;">5.15</div>
<div style="position:absolute;left:649px;top:348px;width:62px;height:27px;text-align:center;line-height:29px;white-space:nowrap;overflow:visible;color:#333;letter-spacing:0.4px;text-indent:0.4px;-webkit-text-stroke:0;background:#f0f7fb;">4.41</div>
<div style="position:absolute;left:712px;top:348px;width:62px;height:27px;text-align:center;line-height:29px;white-space:nowrap;overflow:visible;color:#333;letter-spacing:0.4px;text-indent:0.4px;-webkit-text-stroke:0;background:#f0f7fb;">1.55</div>
<div style="position:absolute;left:775px;top:348px;width:38px;height:27px;text-align:center;line-height:29px;white-space:nowrap;overflow:visible;color:#007800;background:#f0f0f0;">負</div>
<div style="position:absolute;left:814px;top:348px;width:38px;height:27px;text-align:center;line-height:29px;white-space:nowrap;overflow:visible;color:#0000ff;background:#f0f0f0;">走</div>
<div style="position:absolute;left:853px;top:348px;width:56px;height:27px;text-align:center;line-height:29px;white-space:nowrap;overflow:visible;color:#007800;background:#f0f0f0;">小</div>
<div style="position:absolute;left:1px;top:376px;width:908px;height:27px;background:#fff;text-align:center;line-height:27px;white-space:nowrap"><div style="position:absolute;left:0;top:0;width:908px;height:27px;line-height:29px;text-align:left"><span style="position:absolute;left:287.5px;top:0;color:#222">近</span><span style="position:absolute;left:299.5px;top:0;color:#ff0000"><span style="letter-spacing:0.3px">10</span></span><span style="position:absolute;left:313px;top:0;color:#222">场,胜</span><span style="position:absolute;left:341.5px;top:0;color:#222">3</span><span style="position:absolute;left:349px;top:0;color:#222">平</span><span style="position:absolute;left:360.5px;top:0;color:#222">3</span><span style="position:absolute;left:368px;top:0;color:#222">负</span><span style="position:absolute;left:379.5px;top:0;color:#222">4</span><span style="position:absolute;left:386.5px;top:0;color:#222">, 胜率:</span><span style="position:absolute;left:423px;top:4px;width:36px;height:18px;background:#007800;color:#fff;font-size:13px;line-height:18px;text-align:center;-webkit-text-stroke:0">30%</span><span style="position:absolute;left:462.5px;top:0;color:#222">赢率:</span><span style="position:absolute;left:489.5px;top:0;color:#0000ff"><span style="letter-spacing:0.5px">50%</span></span><span style="position:absolute;left:520px;top:0;color:#222">大:</span><span style="position:absolute;left:535.5px;top:0;color:#0000ff"><span style="letter-spacing:0.5px">60%</span></span><span style="position:absolute;left:566px;top:0;color:#222">单率:</span><span style="position:absolute;left:592.75px;top:0;color:#0000ff"><span style="letter-spacing:0.5px">60%</span></span></div></div>
<div style="position:absolute;left:0px;top:54px;width:910px;height:1px;background:#c0c0c0"></div>
<div style="position:absolute;left:435px;top:77px;width:475px;height:1px;background:#c0c0c0"></div>
<div style="position:absolute;left:0px;top:95px;width:910px;height:1px;background:#c0c0c0"></div>
<div style="position:absolute;left:0px;top:123px;width:910px;height:1px;background:#c0c0c0"></div>
<div style="position:absolute;left:0px;top:151px;width:910px;height:1px;background:#c0c0c0"></div>
<div style="position:absolute;left:0px;top:179px;width:910px;height:1px;background:#c0c0c0"></div>
<div style="position:absolute;left:0px;top:207px;width:910px;height:1px;background:#c0c0c0"></div>
<div style="position:absolute;left:0px;top:235px;width:910px;height:1px;background:#c0c0c0"></div>
<div style="position:absolute;left:0px;top:263px;width:910px;height:1px;background:#c0c0c0"></div>
<div style="position:absolute;left:0px;top:291px;width:910px;height:1px;background:#c0c0c0"></div>
<div style="position:absolute;left:0px;top:319px;width:910px;height:1px;background:#c0c0c0"></div>
<div style="position:absolute;left:0px;top:347px;width:910px;height:1px;background:#c0c0c0"></div>
<div style="position:absolute;left:0px;top:375px;width:910px;height:1px;background:#c0c0c0"></div>
<div style="position:absolute;left:0px;top:403px;width:910px;height:1px;background:#c0c0c0"></div>
<div style="position:absolute;left:0px;top:54px;width:1px;height:322px;background:#c0c0c0"></div>
<div style="position:absolute;left:55px;top:54px;width:1px;height:322px;background:#c0c0c0"></div>
<div style="position:absolute;left:130px;top:54px;width:1px;height:322px;background:#c0c0c0"></div>
<div style="position:absolute;left:220px;top:54px;width:1px;height:322px;background:#c0c0c0"></div>
<div style="position:absolute;left:307px;top:54px;width:1px;height:322px;background:#c0c0c0"></div>
<div style="position:absolute;left:345px;top:54px;width:1px;height:322px;background:#c0c0c0"></div>
<div style="position:absolute;left:435px;top:54px;width:1px;height:322px;background:#c0c0c0"></div>
<div style="position:absolute;left:474px;top:77px;width:1px;height:299px;background:#c0c0c0"></div>
<div style="position:absolute;left:547px;top:77px;width:1px;height:299px;background:#c0c0c0"></div>
<div style="position:absolute;left:587px;top:54px;width:1px;height:322px;background:#c0c0c0"></div>
<div style="position:absolute;left:648px;top:77px;width:1px;height:299px;background:#c0c0c0"></div>
<div style="position:absolute;left:711px;top:77px;width:1px;height:299px;background:#c0c0c0"></div>
<div style="position:absolute;left:774px;top:54px;width:1px;height:322px;background:#c0c0c0"></div>
<div style="position:absolute;left:813px;top:77px;width:1px;height:299px;background:#c0c0c0"></div>
<div style="position:absolute;left:852px;top:77px;width:1px;height:299px;background:#c0c0c0"></div>
<div style="position:absolute;left:909px;top:54px;width:1px;height:322px;background:#c0c0c0"></div>
<div style="position:absolute;left:0px;top:375px;width:1px;height:29px;background:#c0c0c0"></div>
<div style="position:absolute;left:909px;top:375px;width:1px;height:29px;background:#c0c0c0"></div>
<div style="position:absolute;left:20px;top:412.5px;white-space:nowrap;line-height:14px;font-weight:bold;font-size:13px;color:#222;-webkit-text-stroke:0">前进之鹰</div>
<div style="position:absolute;left:303.75px;top:413px;white-space:nowrap;line-height:14px;color:#222">近</div>
<div style="position:absolute;left:320px;top:411px;width:34px;height:14px;border:1px solid #a9a9a9;border-radius:2px;background:#fff;line-height:14px"><span style="position:absolute;left:4.5px;top:1.5px;color:#111;font-size:11px">10</span><svg style="position:absolute;right:5px;top:4px" width="7" height="6"><path d="M0 0H7L3.5 6Z" fill="#111"/></svg></div>
<div style="position:absolute;left:360px;top:413px;white-space:nowrap;line-height:14px;color:#222">场</div>
<div style="position:absolute;left:376px;top:414px;width:10px;height:10px;border:1px solid #b2b2b2;border-radius:3px;background:linear-gradient(#efefef,#dedede);"></div>
<div style="position:absolute;left:393px;top:413px;white-space:nowrap;line-height:14px;color:#222">同客</div>
<div style="position:absolute;left:421px;top:414px;width:10px;height:10px;border:1px solid #b2b2b2;border-radius:3px;background:linear-gradient(#efefef,#dedede);"><svg style="position:absolute;left:-1px;top:-1px" width="12" height="12"><path d="M2.6 6.3L4.9 9.2L9.6 2.9" fill="none" stroke="#3a3a3a" stroke-width="2.5"/></svg></div>
<div style="position:absolute;left:433.75px;top:413px;white-space:nowrap;line-height:14px;color:#222">荷甲</div>
<div style="position:absolute;left:458px;top:414px;width:10px;height:10px;border:1px solid #b2b2b2;border-radius:3px;background:linear-gradient(#efefef,#dedede);"><svg style="position:absolute;left:-1px;top:-1px" width="12" height="12"><path d="M2.6 6.3L4.9 9.2L9.6 2.9" fill="none" stroke="#3a3a3a" stroke-width="2.5"/></svg></div>
<div style="position:absolute;left:470.6px;top:413px;white-space:nowrap;line-height:14px;color:#222">欧罗巴杯</div>
<div style="position:absolute;left:519px;top:414px;width:10px;height:10px;border:1px solid #b2b2b2;border-radius:3px;background:linear-gradient(#efefef,#dedede);"><svg style="position:absolute;left:-1px;top:-1px" width="12" height="12"><path d="M2.6 6.3L4.9 9.2L9.6 2.9" fill="none" stroke="#3a3a3a" stroke-width="2.5"/></svg></div>
<div style="position:absolute;left:531.9px;top:413px;white-space:nowrap;line-height:14px;color:#222">荷兰杯</div>
<div style="position:absolute;left:568px;top:414px;width:10px;height:10px;border:1px solid #b2b2b2;border-radius:3px;background:linear-gradient(#efefef,#dedede);"><svg style="position:absolute;left:-1px;top:-1px" width="12" height="12"><path d="M2.6 6.3L4.9 9.2L9.6 2.9" fill="none" stroke="#3a3a3a" stroke-width="2.5"/></svg></div>
<div style="position:absolute;left:580.6px;top:413px;white-space:nowrap;line-height:14px;color:#222">球会友谊</div>
<div style="position:absolute;left:629px;top:414px;width:10px;height:10px;border:1px solid #b2b2b2;border-radius:3px;background:linear-gradient(#efefef,#dedede);"><svg style="position:absolute;left:-1px;top:-1px" width="12" height="12"><path d="M2.6 6.3L4.9 9.2L9.6 2.9" fill="none" stroke="#3a3a3a" stroke-width="2.5"/></svg></div>
<div style="position:absolute;left:641.9px;top:413px;white-space:nowrap;line-height:14px;color:#222">荷超杯</div>
<div style="position:absolute;left:0px;top:429px;width:910px;height:42px;background:#dce3ec"></div>
<div style="position:absolute;left:1px;top:430px;width:71px;height:40px;text-align:center;line-height:40px;white-space:nowrap;overflow:visible;color:#222;">类型</div>
<div style="position:absolute;left:73px;top:430px;width:74px;height:40px;text-align:center;line-height:40px;white-space:nowrap;overflow:visible;color:#222;">日期</div>
<div style="position:absolute;left:148px;top:430px;width:72px;height:40px;text-align:center;line-height:40px;white-space:nowrap;overflow:visible;color:#222;">主场</div>
<div style="position:absolute;left:221px;top:430px;width:86px;height:40px;text-align:center;line-height:40px;white-space:nowrap;overflow:visible;color:#222;">比分(半场)</div>
<div style="position:absolute;left:308px;top:430px;width:38px;height:40px;text-align:center;line-height:40px;white-space:nowrap;overflow:visible;color:#222;">角球</div>
<div style="position:absolute;left:347px;top:430px;width:89px;height:40px;text-align:center;line-height:40px;white-space:nowrap;overflow:visible;color:#222;">客场</div>
<div style="position:absolute;left:437px;top:453px;width:40px;height:17px;text-align:center;line-height:19px;white-space:nowrap;overflow:visible;color:#222;">主</div>
<div style="position:absolute;left:478px;top:453px;width:66px;height:17px;text-align:center;line-height:19px;white-space:nowrap;overflow:visible;color:#222;">盘口</div>
<div style="position:absolute;left:545px;top:453px;width:42px;height:17px;text-align:center;line-height:19px;white-space:nowrap;overflow:visible;color:#222;">客</div>
<div style="position:absolute;left:588px;top:453px;width:56px;height:17px;text-align:center;line-height:19px;white-space:nowrap;overflow:visible;color:#222;">主</div>
<div style="position:absolute;left:645px;top:453px;width:56px;height:17px;text-align:center;line-height:19px;white-space:nowrap;overflow:visible;color:#222;">和</div>
<div style="position:absolute;left:702px;top:453px;width:72px;height:17px;text-align:center;line-height:19px;white-space:nowrap;overflow:visible;color:#222;">客</div>
<div style="position:absolute;left:775px;top:453px;width:38px;height:17px;text-align:center;line-height:19px;white-space:nowrap;overflow:visible;color:#222;">胜负</div>
<div style="position:absolute;left:814px;top:453px;width:38px;height:17px;text-align:center;line-height:19px;white-space:nowrap;overflow:visible;color:#222;">让球</div>
<div style="position:absolute;left:853px;top:453px;width:56px;height:17px;text-align:center;line-height:19px;white-space:nowrap;overflow:visible;color:#222;">进球数</div>
<div style="position:absolute;left:460px;top:431px;width:57px;height:18px;border:1px solid #a9a9a9;border-radius:2px;background:#fff;line-height:18px;"><span style="position:absolute;left:4px;top:2px;color:#111"><span style="letter-spacing:0.5px">Crow*</span></span><svg style="position:absolute;right:5px;top:6px" width="7" height="6"><path d="M0 0H7L3.5 6Z" fill="#111"/></svg></div>
<div style="position:absolute;left:527px;top:431px;width:34px;height:18px;border:1px solid #a9a9a9;border-radius:2px;background:#fff;line-height:18px;"><span style="position:absolute;left:4px;top:1px;color:#111">终</span><svg style="position:absolute;right:5px;top:6px" width="7" height="6"><path d="M0 0H7L3.5 6Z" fill="#111"/></svg></div>
<div style="position:absolute;left:617px;top:431px;width:82px;height:18px;border:1px solid #a9a9a9;border-radius:2px;background:#fff;line-height:18px;"><span style="position:absolute;left:4px;top:1px;color:#111">胜平负均值</span><svg style="position:absolute;right:5px;top:6px" width="7" height="6"><path d="M0 0H7L3.5 6Z" fill="#111"/></svg></div>
<div style="position:absolute;left:709px;top:431px;width:34px;height:18px;border:1px solid #a9a9a9;border-radius:2px;background:#fff;line-height:18px;"><span style="position:absolute;left:4px;top:1px;color:#111">终</span><svg style="position:absolute;right:5px;top:6px" width="7" height="6"><path d="M0 0H7L3.5 6Z" fill="#111"/></svg></div>
<div style="position:absolute;left:818px;top:431px;width:46px;height:18px;border:1px solid #a9a9a9;border-radius:2px;background:#fff;line-height:18px;"><span style="position:absolute;left:4px;top:1px;color:#111">全场</span><svg style="position:absolute;right:5px;top:6px" width="7" height="6"><path d="M0 0H7L3.5 6Z" fill="#111"/></svg></div>
<div style="position:absolute;left:1px;top:471px;width:71px;height:27px;text-align:center;line-height:29px;white-space:nowrap;overflow:visible;color:#fff;background:#ff6193;">荷甲</div>
<div style="position:absolute;left:73px;top:471px;width:74px;height:27px;text-align:center;line-height:29px;white-space:nowrap;overflow:visible;color:#333;letter-spacing:0.2px;text-indent:0.2px;-webkit-text-stroke:0;background:#ffffff;">26-02-02</div>
<div style="position:absolute;left:148px;top:471px;width:72px;height:27px;text-align:center;line-height:29px;white-space:nowrap;overflow:visible;;background:#ffffff;">沃伦丹</div>
<div style="position:absolute;left:221px;top:471px;width:86px;height:27px;text-align:center;line-height:29px;white-space:nowrap;overflow:visible;letter-spacing:0.45px;text-indent:0.45px;-webkit-text-stroke:0;background:#ffffff;"><span style="color:#ff0000">1-1</span><span style="color:#333">(0-1)</span></div>
<div style="position:absolute;left:308px;top:471px;width:38px;height:27px;text-align:center;line-height:29px;white-space:nowrap;overflow:visible;color:#333;letter-spacing:0.3px;text-indent:0.3px;-webkit-text-stroke:0;background:#ffffff;">6-5</div>
<div style="position:absolute;left:347px;top:471px;width:89px;height:27px;text-align:center;line-height:29px;white-space:nowrap;overflow:visible;;background:#ffffff;"><span style="color:#007800">前进之鹰</span><span style="display:inline-block;width:8px;height:15px;line-height:15px;vertical-align:1px;background:#f00;color:#fff;font-weight:bold;text-align:center;-webkit-text-stroke:0">1</span></div>
<div style="position:absolute;left:437px;top:471px;width:40px;height:27px;text-align:center;line-height:29px;white-space:nowrap;overflow:visible;color:#333;letter-spacing:0.4px;text-indent:0.4px;-webkit-text-stroke:0;background:#fdf9f6;">0.90</div>
<div style="position:absolute;left:478px;top:471px;width:66px;height:27px;text-align:center;line-height:29px;white-space:nowrap;overflow:visible;color:#222;background:#fdf9f6;"><span style="color:#ff0000">*</span>半球</div>
<div style="position:absolute;left:545px;top:471px;width:42px;height:27px;text-align:center;line-height:29px;white-space:nowrap;overflow:visible;color:#333;letter-spacing:0.4px;text-indent:0.4px;-webkit-text-stroke:0;background:#fdf9f6;">0.98</div>
<div style="position:absolute;left:588px;top:471px;width:56px;height:27px;text-align:center;line-height:29px;white-space:nowrap;overflow:visible;color:#333;letter-spacing:0.4px;text-indent:0.4px;-webkit-text-stroke:0;background:#f0f7fb;">3.25</div>
<div style="position:absolute;left:645px;top:471px;width:56px;height:27px;text-align:center;line-height:29px;white-space:nowrap;overflow:visible;color:#333;letter-spacing:0.4px;text-indent:0.4px;-webkit-text-stroke:0;background:#f0f7fb;">3.53</div>
<div style="position:absolute;left:702px;top:471px;width:72px;height:27px;text-align:center;line-height:29px;white-space:nowrap;overflow:visible;color:#333;letter-spacing:0.4px;text-indent:0.4px;-webkit-text-stroke:0;background:#f0f7fb;">2.12</div>
<div style="position:absolute;left:775px;top:471px;width:38px;height:27px;text-align:center;line-height:29px;white-space:nowrap;overflow:visible;color:#0000ff;background:#ffffff;">平</div>
<div style="position:absolute;left:814px;top:471px;width:38px;height:27px;text-align:center;line-height:29px;white-space:nowrap;overflow:visible;color:#007800;background:#ffffff;">輸</div>
<div style="position:absolute;left:853px;top:471px;width:56px;height:27px;text-align:center;line-height:29px;white-space:nowrap;overflow:visible;color:#007800;background:#ffffff;">小</div>
<div style="position:absolute;left:1px;top:499px;width:71px;height:27px;text-align:center;line-height:29px;white-space:nowrap;overflow:visible;color:#fff;background:#6600dd;">欧罗巴杯</div>
<div style="position:absolute;left:73px;top:499px;width:74px;height:27px;text-align:center;line-height:29px;white-space:nowrap;overflow:visible;color:#333;letter-spacing:0.2px;text-indent:0.2px;-webkit-text-stroke:0;background:#f0f0f0;">26-01-30</div>
<div style="position:absolute;left:148px;top:499px;width:72px;height:27px;text-align:center;line-height:29px;white-space:nowrap;overflow:visible;;background:#f0f0f0;"><span style="color:#007800">前进之鹰</span></div>
<div style="position:absolute;left:221px;top:499px;width:86px;height:27px;text-align:center;line-height:29px;white-space:nowrap;overflow:visible;letter-spacing:0.45px;text-indent:0.45px;-webkit-text-stroke:0;background:#f0f0f0;"><span style="color:#ff0000">0-0</span><span style="color:#333">(0-0)</span></div>
<div style="position:absolute;left:308px;top:499px;width:38px;height:27px;text-align:center;line-height:29px;white-space:nowrap;overflow:visible;color:#333;letter-spacing:0.3px;text-indent:0.3px;-webkit-text-stroke:0;background:#f0f0f0;">1-3</div>
<div style="position:absolute;left:347px;top:499px;width:89px;height:27px;text-align:center;line-height:29px;white-space:nowrap;overflow:visible;;background:#f0f0f0;">布拉加</div>
<div style="position:absolute;left:437px;top:499px;width:40px;height:27px;text-align:center;line-height:29px;white-space:nowrap;overflow:visible;color:#333;letter-spacing:0.4px;text-indent:0.4px;-webkit-text-stroke:0;background:#fdf9f6;">1.06</div>
<div style="position:absolute;left:478px;top:499px;width:66px;height:27px;text-align:center;line-height:29px;white-space:nowrap;overflow:visible;color:#222;background:#fdf9f6;"><span style="color:#ff0000">*</span>半/一</div>
<div style="position:absolute;left:545px;top:499px;width:42px;height:27px;text-align:center;line-height:29px;white-space:nowrap;overflow:visible;color:#333;letter-spacing:0.4px;text-indent:0.4px;-webkit-text-stroke:0;background:#fdf9f6;">0.82</div>
<div style="position:absolute;left:588px;top:499px;width:56px;height:27px;text-align:center;line-height:29px;white-space:nowrap;overflow:visible;color:#333;letter-spacing:0.4px;text-indent:0.4px;-webkit-text-stroke:0;background:#f0f7fb;">4.99</div>
<div style="position:absolute;left:645px;top:499px;width:56px;height:27px;text-align:center;line-height:29px;white-space:nowrap;overflow:visible;color:#333;letter-spacing:0.4px;text-indent:0.4px;-webkit-text-stroke:0;background:#f0f7fb;">4.18</div>
<div style="position:absolute;left:702px;top:499px;width:72px;height:27px;text-align:center;line-height:29px;white-space:nowrap;overflow:visible;color:#333;letter-spacing:0.4px;text-indent:0.4px;-webkit-text-stroke:0;background:#f0f7fb;">1.62</div>
<div style="position:absolute;left:775px;top:499px;width:38px;height:27px;text-align:center;line-height:29px;white-space:nowrap;overflow:visible;color:#0000ff;background:#f0f0f0;">平</div>
<div style="position:absolute;left:814px;top:499px;width:38px;height:27px;text-align:center;line-height:29px;white-space:nowrap;overflow:visible;color:#ff0000;background:#f0f0f0;">贏</div>
<div style="position:absolute;left:853px;top:499px;width:56px;height:27px;text-align:center;line-height:29px;white-space:nowrap;overflow:visible;color:#007800;background:#f0f0f0;">小</div>
<div style="position:absolute;left:1px;top:527px;width:71px;height:27px;text-align:center;line-height:29px;white-space:nowrap;overflow:visible;color:#fff;background:#6600dd;">欧罗巴杯</div>
<div style="position:absolute;left:73px;top:527px;width:74px;height:27px;text-align:center;line-height:29px;white-space:nowrap;overflow:visible;color:#333;letter-spacing:0.2px;text-indent:0.2px;-webkit-text-stroke:0;background:#ffffff;">26-01-23</div>
<div style="position:absolute;left:148px;top:527px;width:72px;height:27px;text-align:center;line-height:29px;white-space:nowrap;overflow:visible;;background:#ffffff;">尼斯</div>
<div style="position:absolute;left:221px;top:527px;width:86px;height:27px;text-align:center;line-height:29px;white-space:nowrap;overflow:visible;letter-spacing:0.45px;text-indent:0.45px;-webkit-text-stroke:0;background:#ffffff;"><span style="color:#ff0000">3-1</span><span style="color:#333">(2-0)</span></div>
<div style="position:absolute;left:308px;top:527px;width:38px;height:27px;text-align:center;line-height:29px;white-space:nowrap;overflow:visible;color:#333;letter-spacing:0.3px;text-indent:0.3px;-webkit-text-stroke:0;background:#ffffff;">6-12</div>
<div style="position:absolute;left:347px;top:527px;width:89px;height:27px;text-align:center;line-height:29px;white-space:nowrap;overflow:visible;;background:#ffffff;"><span style="color:#007800">前进之鹰</span></div>
<div style="position:absolute;left:437px;top:527px;width:40px;height:27px;text-align:center;line-height:29px;white-space:nowrap;overflow:visible;color:#333;letter-spacing:0.4px;text-indent:0.4px;-webkit-text-stroke:0;background:#fdf9f6;">1.04</div>
<div style="position:absolute;left:478px;top:527px;width:66px;height:27px;text-align:center;line-height:29px;white-space:nowrap;overflow:visible;color:#222;background:#fdf9f6;">半球</div>
<div style="position:absolute;left:545px;top:527px;width:42px;height:27px;text-align:center;line-height:29px;white-space:nowrap;overflow:visible;color:#333;letter-spacing:0.4px;text-indent:0.4px;-webkit-text-stroke:0;background:#fdf9f6;">0.84</div>
<div style="position:absolute;left:588px;top:527px;width:56px;height:27px;text-align:center;line-height:29px;white-space:nowrap;overflow:visible;color:#333;letter-spacing:0.4px;text-indent:0.4px;-webkit-text-stroke:0;background:#f0f7fb;">2.00</div>
<div style="position:absolute;left:645px;top:527px;width:56px;height:27px;text-align:center;line-height:29px;white-space:nowrap;overflow:visible;color:#333;letter-spacing:0.4px;text-indent:0.4px;-webkit-text-stroke:0;background:#f0f7fb;">3.84</div>
<div style="position:absolute;left:702px;top:527px;width:72px;height:27px;text-align:center;line-height:29px;white-space:nowrap;overflow:visible;color:#333;letter-spacing:0.4px;text-indent:0.4px;-webkit-text-stroke:0;background:#f0f7fb;">3.41</div>
<div style="position:absolute;left:775px;top:527px;width:38px;height:27px;text-align:center;line-height:29px;white-space:nowrap;overflow:visible;color:#007800;background:#ffffff;">負</div>
<div style="position:absolute;left:814px;top:527px;width:38px;height:27px;text-align:center;line-height:29px;white-space:nowrap;overflow:visible;color:#007800;background:#ffffff;">輸</div>
<div style="position:absolute;left:853px;top:527px;width:56px;height:27px;text-align:center;line-height:29px;white-space:nowrap;overflow:visible;color:#ff0000;background:#ffffff;">大</div>
<div style="position:absolute;left:1px;top:555px;width:71px;height:27px;text-align:center;line-height:29px;white-space:nowrap;overflow:visible;color:#fff;background:#ff6193;">荷甲</div>
<div style="position:absolute;left:73px;top:555px;width:74px;height:27px;text-align:center;line-height:29px;white-space:nowrap;overflow:visible;color:#333;letter-spacing:0.2px;text-indent:0.2px;-webkit-text-stroke:0;background:#f0f0f0;">26-01-17</div>
<div style="position:absolute;left:148px;top:555px;width:72px;height:27px;text-align:center;line-height:29px;white-space:nowrap;overflow:visible;;background:#f0f0f0;">阿贾克斯</div>
<div style="position:absolute;left:221px;top:555px;width:86px;height:27px;text-align:center;line-height:29px;white-space:nowrap;overflow:visible;letter-spacing:0.45px;text-indent:0.45px;-webkit-text-stroke:0;background:#f0f0f0;"><span style="color:#ff0000">2-2</span><span style="color:#333">(2-0)</span></div>
<div style="position:absolute;left:308px;top:555px;width:38px;height:27px;text-align:center;line-height:29px;white-space:nowrap;overflow:visible;color:#333;letter-spacing:0.3px;text-indent:0.3px;-webkit-text-stroke:0;background:#f0f0f0;">1-5</div>
<div style="position:absolute;left:347px;top:555px;width:89px;height:27px;text-align:center;line-height:29px;white-space:nowrap;overflow:visible;;background:#f0f0f0;"><span style="color:#007800">前进之鹰</span></div>
<div style="position:absolute;left:437px;top:555px;width:40px;height:27px;text-align:center;line-height:29px;white-space:nowrap;overflow:visible;color:#333;letter-spacing:0.4px;text-indent:0.4px;-webkit-text-stroke:0;background:#fdf9f6;">0.88</div>
<div style="position:absolute;left:478px;top:555px;width:66px;height:27px;text-align:center;line-height:29px;white-space:nowrap;overflow:visible;color:#222;background:#fdf9f6;">半/一</div>
<div style="position:absolute;left:545px;top:555px;width:42px;height:27px;text-align:center;line-height:29px;white-space:nowrap;overflow:visible;color:#333;letter-spacing:0.4px;text-indent:0.4px;-webkit-text-stroke:0;background:#fdf9f6;">1.00</div>
<div style="position:absolute;left:588px;top:555px;width:56px;height:27px;text-align:center;line-height:29px;white-space:nowrap;overflow:visible;color:#333;letter-spacing:0.4px;text-indent:0.4px;-webkit-text-stroke:0;background:#f0f7fb;">1.59</div>
<div style="position:absolute;left:645px;top:555px;width:56px;height:27px;text-align:center;line-height:29px;white-space:nowrap;overflow:visible;color:#333;letter-spacing:0.4px;text-indent:0.4px;-webkit-text-stroke:0;background:#f0f7fb;">4.22</div>
<div style="position:absolute;left:702px;top:555px;width:72px;height:27px;text-align:center;line-height:29px;white-space:nowrap;overflow:visible;color:#333;letter-spacing:0.4px;text-indent:0.4px;-webkit-text-stroke:0;background:#f0f7fb;">5.06</div>
<div style="position:absolute;left:775px;top:555px;width:38px;height:27px;text-align:center;line-height:29px;white-space:nowrap;overflow:visible;color:#0000ff;background:#f0f0f0;">平</div>
<div style="position:absolute;left:814px;top:555px;width:38px;height:27px;text-align:center;line-height:29px;white-space:nowrap;overflow:visible;color:#ff0000;background:#f0f0f0;">贏</div>
<div style="position:absolute;left:853px;top:555px;width:56px;height:27px;text-align:center;line-height:29px;white-space:nowrap;overflow:visible;color:#ff0000;background:#f0f0f0;">大</div>
<div style="position:absolute;left:1px;top:583px;width:71px;height:27px;text-align:center;line-height:29px;white-space:nowrap;overflow:visible;color:#fff;background:#ff6670;">荷兰杯</div>
<div style="position:absolute;left:73px;top:583px;width:74px;height:27px;text-align:center;line-height:29px;white-space:nowrap;overflow:visible;color:#333;letter-spacing:0.2px;text-indent:0.2px;-webkit-text-stroke:0;background:#ffffff;">26-01-15</div>
<div style="position:absolute;left:148px;top:583px;width:72px;height:27px;text-align:center;line-height:29px;white-space:nowrap;overflow:visible;;background:#ffffff;"><span style="color:#007800">前进之鹰</span></div>
<div style="position:absolute;left:221px;top:583px;width:86px;height:27px;text-align:center;line-height:29px;white-space:nowrap;overflow:visible;letter-spacing:0.45px;text-indent:0.45px;-webkit-text-stroke:0;background:#ffffff;"><span style="color:#ff0000">2-2</span><span style="color:#333">(1-1)</span></div>
<div style="position:absolute;left:308px;top:583px;width:38px;height:27px;text-align:center;line-height:29px;white-space:nowrap;overflow:visible;color:#333;letter-spacing:0.3px;text-indent:0.3px;-webkit-text-stroke:0;background:#ffffff;">4-4</div>
<div style="position:absolute;left:347px;top:583px;width:89px;height:27px;text-align:center;line-height:29px;white-space:nowrap;overflow:visible;;background:#ffffff;">赫拉克勒斯</div>
<div style="position:absolute;left:437px;top:583px;width:40px;height:27px;text-align:center;line-height:29px;white-space:nowrap;overflow:visible;color:#333;letter-spacing:0.4px;text-indent:0.4px;-webkit-text-stroke:0;background:#fdf9f6;">1.00</div>
<div style="position:absolute;left:478px;top:583px;width:66px;height:27px;text-align:center;line-height:29px;white-space:nowrap;overflow:visible;color:#222;background:#fdf9f6;">半/一</div>
<div style="position:absolute;left:545px;top:583px;width:42px;height:27px;text-align:center;line-height:29px;white-space:nowrap;overflow:visible;color:#333;letter-spacing:0.4px;text-indent:0.4px;-webkit-text-stroke:0;background:#fdf9f6;">0.82</div>
<div style="position:absolute;left:588px;top:583px;width:56px;height:27px;text-align:center;line-height:29px;white-space:nowrap;overflow:visible;color:#333;letter-spacing:0.4px;text-indent:0.4px;-webkit-text-stroke:0;background:#f0f7fb;">1.76</div>
<div style="position:absolute;left:645px;top:583px;width:56px;height:27px;text-align:center;line-height:29px;white-space:nowrap;overflow:visible;color:#333;letter-spacing:0.4px;text-indent:0.4px;-webkit-text-stroke:0;background:#f0f7fb;">3.94</div>
<div style="position:absolute;left:702px;top:583px;width:72px;height:27px;text-align:center;line-height:29px;white-space:nowrap;overflow:visible;color:#333;letter-spacing:0.4px;text-indent:0.4px;-webkit-text-stroke:0;background:#f0f7fb;">3.88</div>
<div style="position:absolute;left:775px;top:583px;width:38px;height:27px;text-align:center;line-height:29px;white-space:nowrap;overflow:visible;color:#0000ff;background:#ffffff;">平</div>
<div style="position:absolute;left:814px;top:583px;width:38px;height:27px;text-align:center;line-height:29px;white-space:nowrap;overflow:visible;color:#007800;background:#ffffff;">輸</div>
<div style="position:absolute;left:853px;top:583px;width:56px;height:27px;text-align:center;line-height:29px;white-space:nowrap;overflow:visible;color:#ff0000;background:#ffffff;">大</div>
<div style="position:absolute;left:1px;top:611px;width:71px;height:27px;text-align:center;line-height:29px;white-space:nowrap;overflow:visible;color:#fff;background:#ff6193;">荷甲</div>
<div style="position:absolute;left:73px;top:611px;width:74px;height:27px;text-align:center;line-height:29px;white-space:nowrap;overflow:visible;color:#333;letter-spacing:0.2px;text-indent:0.2px;-webkit-text-stroke:0;background:#f0f0f0;">26-01-11</div>
<div style="position:absolute;left:148px;top:611px;width:72px;height:27px;text-align:center;line-height:29px;white-space:nowrap;overflow:visible;;background:#f0f0f0;"><span style="color:#007800">前进之鹰</span></div>
<div style="position:absolute;left:221px;top:611px;width:86px;height:27px;text-align:center;line-height:29px;white-space:nowrap;overflow:visible;letter-spacing:0.45px;text-indent:0.45px;-webkit-text-stroke:0;background:#f0f0f0;"><span style="color:#ff0000">2-2</span><span style="color:#333">(1-1)</span></div>
<div style="position:absolute;left:308px;top:611px;width:38px;height:27px;text-align:center;line-height:29px;white-space:nowrap;overflow:visible;color:#333;letter-spacing:0.3px;text-indent:0.3px;-webkit-text-stroke:0;background:#f0f0f0;">9-1</div>
<div style="position:absolute;left:347px;top:611px;width:89px;height:27px;text-align:center;line-height:29px;white-space:nowrap;overflow:visible;;background:#f0f0f0;">锡塔德命运</div>
<div style="position:absolute;left:437px;top:611px;width:40px;height:27px;text-align:center;line-height:29px;white-space:nowrap;overflow:visible;color:#333;letter-spacing:0.4px;text-indent:0.4px;-webkit-text-stroke:0;background:#fdf9f6;">0.84</div>
<div style="position:absolute;left:478px;top:611px;width:66px;height:27px;text-align:center;line-height:29px;white-space:nowrap;overflow:visible;color:#222;background:#fdf9f6;">半球</div>
<div style="position:absolute;left:545px;top:611px;width:42px;height:27px;text-align:center;line-height:29px;white-space:nowrap;overflow:visible;color:#333;letter-spacing:0.4px;text-indent:0.4px;-webkit-text-stroke:0;background:#fdf9f6;">1.04</div>
<div style="position:absolute;left:588px;top:611px;width:56px;height:27px;text-align:center;line-height:29px;white-space:nowrap;overflow:visible;color:#333;letter-spacing:0.4px;text-indent:0.4px;-webkit-text-stroke:0;background:#f0f7fb;">1.92</div>
<div style="position:absolute;left:645px;top:611px;width:56px;height:27px;text-align:center;line-height:29px;white-space:nowrap;overflow:visible;color:#333;letter-spacing:0.4px;text-indent:0.4px;-webkit-text-stroke:0;background:#f0f7fb;">3.64</div>
<div style="position:absolute;left:702px;top:611px;width:72px;height:27px;text-align:center;line-height:29px;white-space:nowrap;overflow:visible;color:#333;letter-spacing:0.4px;text-indent:0.4px;-webkit-text-stroke:0;background:#f0f7fb;">3.70</div>
<div style="position:absolute;left:775px;top:611px;width:38px;height:27px;text-align:center;line-height:29px;white-space:nowrap;overflow:visible;color:#0000ff;background:#f0f0f0;">平</div>
<div style="position:absolute;left:814px;top:611px;width:38px;height:27px;text-align:center;line-height:29px;white-space:nowrap;overflow:visible;color:#007800;background:#f0f0f0;">輸</div>
<div style="position:absolute;left:853px;top:611px;width:56px;height:27px;text-align:center;line-height:29px;white-space:nowrap;overflow:visible;color:#ff0000;background:#f0f0f0;">大</div>
<div style="position:absolute;left:1px;top:639px;width:71px;height:27px;text-align:center;line-height:29px;white-space:nowrap;overflow:visible;color:#fff;background:#ff6193;">荷甲</div>
<div style="position:absolute;left:73px;top:639px;width:74px;height:27px;text-align:center;line-height:29px;white-space:nowrap;overflow:visible;color:#333;letter-spacing:0.2px;text-indent:0.2px;-webkit-text-stroke:0;background:#ffffff;">25-12-21</div>
<div style="position:absolute;left:148px;top:639px;width:72px;height:27px;text-align:center;line-height:29px;white-space:nowrap;overflow:visible;;background:#ffffff;"><span style="color:#007800">前进之鹰</span></div>
<div style="position:absolute;left:221px;top:639px;width:86px;height:27px;text-align:center;line-height:29px;white-space:nowrap;overflow:visible;letter-spacing:0.45px;text-indent:0.45px;-webkit-text-stroke:0;background:#ffffff;"><span style="color:#ff0000">1-1</span><span style="color:#333">(1-0)</span></div>
<div style="position:absolute;left:308px;top:639px;width:38px;height:27px;text-align:center;line-height:29px;white-space:nowrap;overflow:visible;color:#333;letter-spacing:0.3px;text-indent:0.3px;-webkit-text-stroke:0;background:#ffffff;">1-8</div>
<div style="position:absolute;left:347px;top:639px;width:89px;height:27px;text-align:center;line-height:29px;white-space:nowrap;overflow:visible;;background:#ffffff;">格罗宁根</div>
<div style="position:absolute;left:437px;top:639px;width:40px;height:27px;text-align:center;line-height:29px;white-space:nowrap;overflow:visible;color:#333;letter-spacing:0.4px;text-indent:0.4px;-webkit-text-stroke:0;background:#fdf9f6;">0.80</div>
<div style="position:absolute;left:478px;top:639px;width:66px;height:27px;text-align:center;line-height:29px;white-space:nowrap;overflow:visible;color:#222;background:#fdf9f6;"><span style="color:#ff0000">*</span>半球</div>
<div style="position:absolute;left:545px;top:639px;width:42px;height:27px;text-align:center;line-height:29px;white-space:nowrap;overflow:visible;color:#333;letter-spacing:0.4px;text-indent:0.4px;-webkit-text-stroke:0;background:#fdf9f6;">1.08</div>
<div style="position:absolute;left:588px;top:639px;width:56px;height:27px;text-align:center;line-height:29px;white-space:nowrap;overflow:visible;color:#333;letter-spacing:0.4px;text-indent:0.4px;-webkit-text-stroke:0;background:#f0f7fb;">3.37</div>
<div style="position:absolute;left:645px;top:639px;width:56px;height:27px;text-align:center;line-height:29px;white-space:nowrap;overflow:visible;color:#333;letter-spacing:0.4px;text-indent:0.4px;-webkit-text-stroke:0;background:#f0f7fb;">3.48</div>
<div style="position:absolute;left:702px;top:639px;width:72px;height:27px;text-align:center;line-height:29px;white-space:nowrap;overflow:visible;color:#333;letter-spacing:0.4px;text-indent:0.4px;-webkit-text-stroke:0;background:#f0f7fb;">2.09</div>
<div style="position:absolute;left:775px;top:639px;width:38px;height:27px;text-align:center;line-height:29px;white-space:nowrap;overflow:visible;color:#0000ff;background:#ffffff;">平</div>
<div style="position:absolute;left:814px;top:639px;width:38px;height:27px;text-align:center;line-height:29px;white-space:nowrap;overflow:visible;color:#ff0000;background:#ffffff;">贏</div>
<div style="position:absolute;left:853px;top:639px;width:56px;height:27px;text-align:center;line-height:29px;white-space:nowrap;overflow:visible;color:#007800;background:#ffffff;">小</div>
<div style="position:absolute;left:1px;top:667px;width:71px;height:27px;text-align:center;line-height:29px;white-space:nowrap;overflow:visible;color:#fff;background:#ff6670;">荷兰杯</div>
<div style="position:absolute;left:73px;top:667px;width:74px;height:27px;text-align:center;line-height:29px;white-space:nowrap;overflow:visible;color:#333;letter-spacing:0.2px;text-indent:0.2px;-webkit-text-stroke:0;background:#f0f0f0;">25-12-18</div>
<div style="position:absolute;left:148px;top:667px;width:72px;height:27px;text-align:center;line-height:29px;white-space:nowrap;overflow:visible;;background:#f0f0f0;">罗达JC</div>
<div style="position:absolute;left:221px;top:667px;width:86px;height:27px;text-align:center;line-height:29px;white-space:nowrap;overflow:visible;letter-spacing:0.45px;text-indent:0.45px;-webkit-text-stroke:0;background:#f0f0f0;"><span style="color:#ff0000">1-1</span><span style="color:#333">(0-0)</span></div>
<div style="position:absolute;left:308px;top:667px;width:38px;height:27px;text-align:center;line-height:29px;white-space:nowrap;overflow:visible;color:#333;letter-spacing:0.3px;text-indent:0.3px;-webkit-text-stroke:0;background:#f0f0f0;">2-9</div>
<div style="position:absolute;left:347px;top:667px;width:89px;height:27px;text-align:center;line-height:29px;white-space:nowrap;overflow:visible;;background:#f0f0f0;"><span style="color:#007800">前进之鹰</span></div>
<div style="position:absolute;left:437px;top:667px;width:40px;height:27px;text-align:center;line-height:29px;white-space:nowrap;overflow:visible;color:#333;letter-spacing:0.4px;text-indent:0.4px;-webkit-text-stroke:0;background:#fdf9f6;">0.88</div>
<div style="position:absolute;left:478px;top:667px;width:66px;height:27px;text-align:center;line-height:29px;white-space:nowrap;overflow:visible;color:#222;background:#fdf9f6;"><span style="color:#ff0000">*</span>平/半</div>
<div style="position:absolute;left:545px;top:667px;width:42px;height:27px;text-align:center;line-height:29px;white-space:nowrap;overflow:visible;color:#333;letter-spacing:0.4px;text-indent:0.4px;-webkit-text-stroke:0;background:#fdf9f6;">0.94</div>
<div style="position:absolute;left:588px;top:667px;width:56px;height:27px;text-align:center;line-height:29px;white-space:nowrap;overflow:visible;color:#333;letter-spacing:0.4px;text-indent:0.4px;-webkit-text-stroke:0;background:#f0f7fb;">3.39</div>
<div style="position:absolute;left:645px;top:667px;width:56px;height:27px;text-align:center;line-height:29px;white-space:nowrap;overflow:visible;color:#333;letter-spacing:0.4px;text-indent:0.4px;-webkit-text-stroke:0;background:#f0f7fb;">3.62</div>
<div style="position:absolute;left:702px;top:667px;width:72px;height:27px;text-align:center;line-height:29px;white-space:nowrap;overflow:visible;color:#333;letter-spacing:0.4px;text-indent:0.4px;-webkit-text-stroke:0;background:#f0f7fb;">1.97</div>
<div style="position:absolute;left:775px;top:667px;width:38px;height:27px;text-align:center;line-height:29px;white-space:nowrap;overflow:visible;color:#0000ff;background:#f0f0f0;">平</div>
<div style="position:absolute;left:814px;top:667px;width:38px;height:27px;text-align:center;line-height:29px;white-space:nowrap;overflow:visible;color:#007800;background:#f0f0f0;">輸</div>
<div style="position:absolute;left:853px;top:667px;width:56px;height:27px;text-align:center;line-height:29px;white-space:nowrap;overflow:visible;color:#007800;background:#f0f0f0;">小</div>
<div style="position:absolute;left:1px;top:695px;width:71px;height:27px;text-align:center;line-height:29px;white-space:nowrap;overflow:visible;color:#fff;background:#ff6193;">荷甲</div>
<div style="position:absolute;left:73px;top:695px;width:74px;height:27px;text-align:center;line-height:29px;white-space:nowrap;overflow:visible;color:#333;letter-spacing:0.2px;text-indent:0.2px;-webkit-text-stroke:0;background:#ffffff;">25-12-14</div>
<div style="position:absolute;left:148px;top:695px;width:72px;height:27px;text-align:center;line-height:29px;white-space:nowrap;overflow:visible;;background:#ffffff;">特温特</div>
<div style="position:absolute;left:221px;top:695px;width:86px;height:27px;text-align:center;line-height:29px;white-space:nowrap;overflow:visible;letter-spacing:0.45px;text-indent:0.45px;-webkit-text-stroke:0;background:#ffffff;"><span style="color:#ff0000">2-0</span><span style="color:#333">(2-0)</span></div>
<div style="position:absolute;left:308px;top:695px;width:38px;height:27px;text-align:center;line-height:29px;white-space:nowrap;overflow:visible;color:#333;letter-spacing:0.3px;text-indent:0.3px;-webkit-text-stroke:0;background:#ffffff;">3-6</div>
<div style="position:absolute;left:347px;top:695px;width:89px;height:27px;text-align:center;line-height:29px;white-space:nowrap;overflow:visible;;background:#ffffff;"><span style="color:#007800">前进之鹰</span></div>
<div style="position:absolute;left:437px;top:695px;width:40px;height:27px;text-align:center;line-height:29px;white-space:nowrap;overflow:visible;color:#333;letter-spacing:0.4px;text-indent:0.4px;-webkit-text-stroke:0;background:#fdf9f6;">0.88</div>
<div style="position:absolute;left:478px;top:695px;width:66px;height:27px;text-align:center;line-height:29px;white-space:nowrap;overflow:visible;color:#222;background:#fdf9f6;">一/球半</div>
<div style="position:absolute;left:545px;top:695px;width:42px;height:27px;text-align:center;line-height:29px;white-space:nowrap;overflow:visible;color:#333;letter-spacing:0.4px;text-indent:0.4px;-webkit-text-stroke:0;background:#fdf9f6;">1.00</div>
<div style="position:absolute;left:588px;top:695px;width:56px;height:27px;text-align:center;line-height:29px;white-space:nowrap;overflow:visible;color:#333;letter-spacing:0.4px;text-indent:0.4px;-webkit-text-stroke:0;background:#f0f7fb;">1.40</div>
<div style="position:absolute;left:645px;top:695px;width:56px;height:27px;text-align:center;line-height:29px;white-space:nowrap;overflow:visible;color:#333;letter-spacing:0.4px;text-indent:0.4px;-webkit-text-stroke:0;background:#f0f7fb;">4.71</div>
<div style="position:absolute;left:702px;top:695px;width:72px;height:27px;text-align:center;line-height:29px;white-space:nowrap;overflow:visible;color:#333;letter-spacing:0.4px;text-indent:0.4px;-webkit-text-stroke:0;background:#f0f7fb;">7.18</div>
<div style="position:absolute;left:775px;top:695px;width:38px;height:27px;text-align:center;line-height:29px;white-space:nowrap;overflow:visible;color:#007800;background:#ffffff;">負</div>
<div style="position:absolute;left:814px;top:695px;width:38px;height:27px;text-align:center;line-height:29px;white-space:nowrap;overflow:visible;color:#007800;background:#ffffff;">輸</div>
<div style="position:absolute;left:853px;top:695px;width:56px;height:27px;text-align:center;line-height:29px;white-space:nowrap;overflow:visible;color:#007800;background:#ffffff;">小</div>
<div style="position:absolute;left:1px;top:723px;width:71px;height:27px;text-align:center;line-height:29px;white-space:nowrap;overflow:visible;color:#fff;background:#6600dd;">欧罗巴杯</div>
<div style="position:absolute;left:73px;top:723px;width:74px;height:27px;text-align:center;line-height:29px;white-space:nowrap;overflow:visible;color:#333;letter-spacing:0.2px;text-indent:0.2px;-webkit-text-stroke:0;background:#f0f0f0;">25-12-12</div>
<div style="position:absolute;left:148px;top:723px;width:72px;height:27px;text-align:center;line-height:29px;white-space:nowrap;overflow:visible;;background:#f0f0f0;">里昂</div>
<div style="position:absolute;left:221px;top:723px;width:86px;height:27px;text-align:center;line-height:29px;white-space:nowrap;overflow:visible;letter-spacing:0.45px;text-indent:0.45px;-webkit-text-stroke:0;background:#f0f0f0;"><span style="color:#ff0000">2-1</span><span style="color:#333">(2-1)</span></div>
<div style="position:absolute;left:308px;top:723px;width:38px;height:27px;text-align:center;line-height:29px;white-space:nowrap;overflow:visible;color:#333;letter-spacing:0.3px;text-indent:0.3px;-webkit-text-stroke:0;background:#f0f0f0;">7-1</div>
<div style="position:absolute;left:347px;top:723px;width:89px;height:27px;text-align:center;line-height:29px;white-space:nowrap;overflow:visible;;background:#f0f0f0;"><span style="color:#007800">前进之鹰</span></div>
<div style="position:absolute;left:437px;top:723px;width:40px;height:27px;text-align:center;line-height:29px;white-space:nowrap;overflow:visible;color:#333;letter-spacing:0.4px;text-indent:0.4px;-webkit-text-stroke:0;background:#fdf9f6;">1.05</div>
<div style="position:absolute;left:478px;top:723px;width:66px;height:27px;text-align:center;line-height:29px;white-space:nowrap;overflow:visible;color:#222;background:#fdf9f6;">两球</div>
<div style="position:absolute;left:545px;top:723px;width:42px;height:27px;text-align:center;line-height:29px;white-space:nowrap;overflow:visible;color:#333;letter-spacing:0.4px;text-indent:0.4px;-webkit-text-stroke:0;background:#fdf9f6;">0.83</div>
<div style="position:absolute;left:588px;top:723px;width:56px;height:27px;text-align:center;line-height:29px;white-space:nowrap;overflow:visible;color:#333;letter-spacing:0.4px;text-indent:0.4px;-webkit-text-stroke:0;background:#f0f7fb;">1.22</div>
<div style="position:absolute;left:645px;top:723px;width:56px;height:27px;text-align:center;line-height:29px;white-space:nowrap;overflow:visible;color:#333;letter-spacing:0.4px;text-indent:0.4px;-webkit-text-stroke:0;background:#f0f7fb;">6.54</div>
<div style="position:absolute;left:702px;top:723px;width:72px;height:27px;text-align:center;line-height:29px;white-space:nowrap;overflow:visible;color:#333;letter-spacing:0.4px;text-indent:0.4px;-webkit-text-stroke:0;background:#f0f7fb;">11.92</div>
<div style="position:absolute;left:775px;top:723px;width:38px;height:27px;text-align:center;line-height:29px;white-space:nowrap;overflow:visible;color:#007800;background:#f0f0f0;">負</div>
<div style="position:absolute;left:814px;top:723px;width:38px;height:27px;text-align:center;line-height:29px;white-space:nowrap;overflow:visible;color:#ff0000;background:#f0f0f0;">贏</div>
<div style="position:absolute;left:853px;top:723px;width:56px;height:27px;text-align:center;line-height:29px;white-space:nowrap;overflow:visible;color:#007800;background:#f0f0f0;">小</div>
<div style="position:absolute;left:0px;top:429px;width:910px;height:1px;background:#c0c0c0"></div>
<div style="position:absolute;left:436px;top:452px;width:474px;height:1px;background:#c0c0c0"></div>
<div style="position:absolute;left:0px;top:470px;width:910px;height:1px;background:#c0c0c0"></div>
<div style="position:absolute;left:0px;top:498px;width:910px;height:1px;background:#c0c0c0"></div>
<div style="position:absolute;left:0px;top:526px;width:910px;height:1px;background:#c0c0c0"></div>
<div style="position:absolute;left:0px;top:554px;width:910px;height:1px;background:#c0c0c0"></div>
<div style="position:absolute;left:0px;top:582px;width:910px;height:1px;background:#c0c0c0"></div>
<div style="position:absolute;left:0px;top:610px;width:910px;height:1px;background:#c0c0c0"></div>
<div style="position:absolute;left:0px;top:638px;width:910px;height:1px;background:#c0c0c0"></div>
<div style="position:absolute;left:0px;top:666px;width:910px;height:1px;background:#c0c0c0"></div>
<div style="position:absolute;left:0px;top:694px;width:910px;height:1px;background:#c0c0c0"></div>
<div style="position:absolute;left:0px;top:722px;width:910px;height:1px;background:#c0c0c0"></div>
<div style="position:absolute;left:0px;top:750px;width:910px;height:1px;background:#c0c0c0"></div>
<div style="position:absolute;left:0px;top:429px;width:1px;height:322px;background:#c0c0c0"></div>
<div style="position:absolute;left:72px;top:429px;width:1px;height:322px;background:#c0c0c0"></div>
<div style="position:absolute;left:147px;top:429px;width:1px;height:322px;background:#c0c0c0"></div>
<div style="position:absolute;left:220px;top:429px;width:1px;height:322px;background:#c0c0c0"></div>
<div style="position:absolute;left:307px;top:429px;width:1px;height:322px;background:#c0c0c0"></div>
<div style="position:absolute;left:346px;top:429px;width:1px;height:322px;background:#c0c0c0"></div>
<div style="position:absolute;left:436px;top:429px;width:1px;height:322px;background:#c0c0c0"></div>
<div style="position:absolute;left:477px;top:452px;width:1px;height:299px;background:#c0c0c0"></div>
<div style="position:absolute;left:544px;top:452px;width:1px;height:299px;background:#c0c0c0"></div>
<div style="position:absolute;left:587px;top:429px;width:1px;height:322px;background:#c0c0c0"></div>
<div style="position:absolute;left:644px;top:452px;width:1px;height:299px;background:#c0c0c0"></div>
<div style="position:absolute;left:701px;top:452px;width:1px;height:299px;background:#c0c0c0"></div>
<div style="position:absolute;left:774px;top:429px;width:1px;height:322px;background:#c0c0c0"></div>
<div style="position:absolute;left:813px;top:452px;width:1px;height:299px;background:#c0c0c0"></div>
<div style="position:absolute;left:852px;top:452px;width:1px;height:299px;background:#c0c0c0"></div>
<div style="position:absolute;left:909px;top:429px;width:1px;height:322px;background:#c0c0c0"></div>
</body></html>
